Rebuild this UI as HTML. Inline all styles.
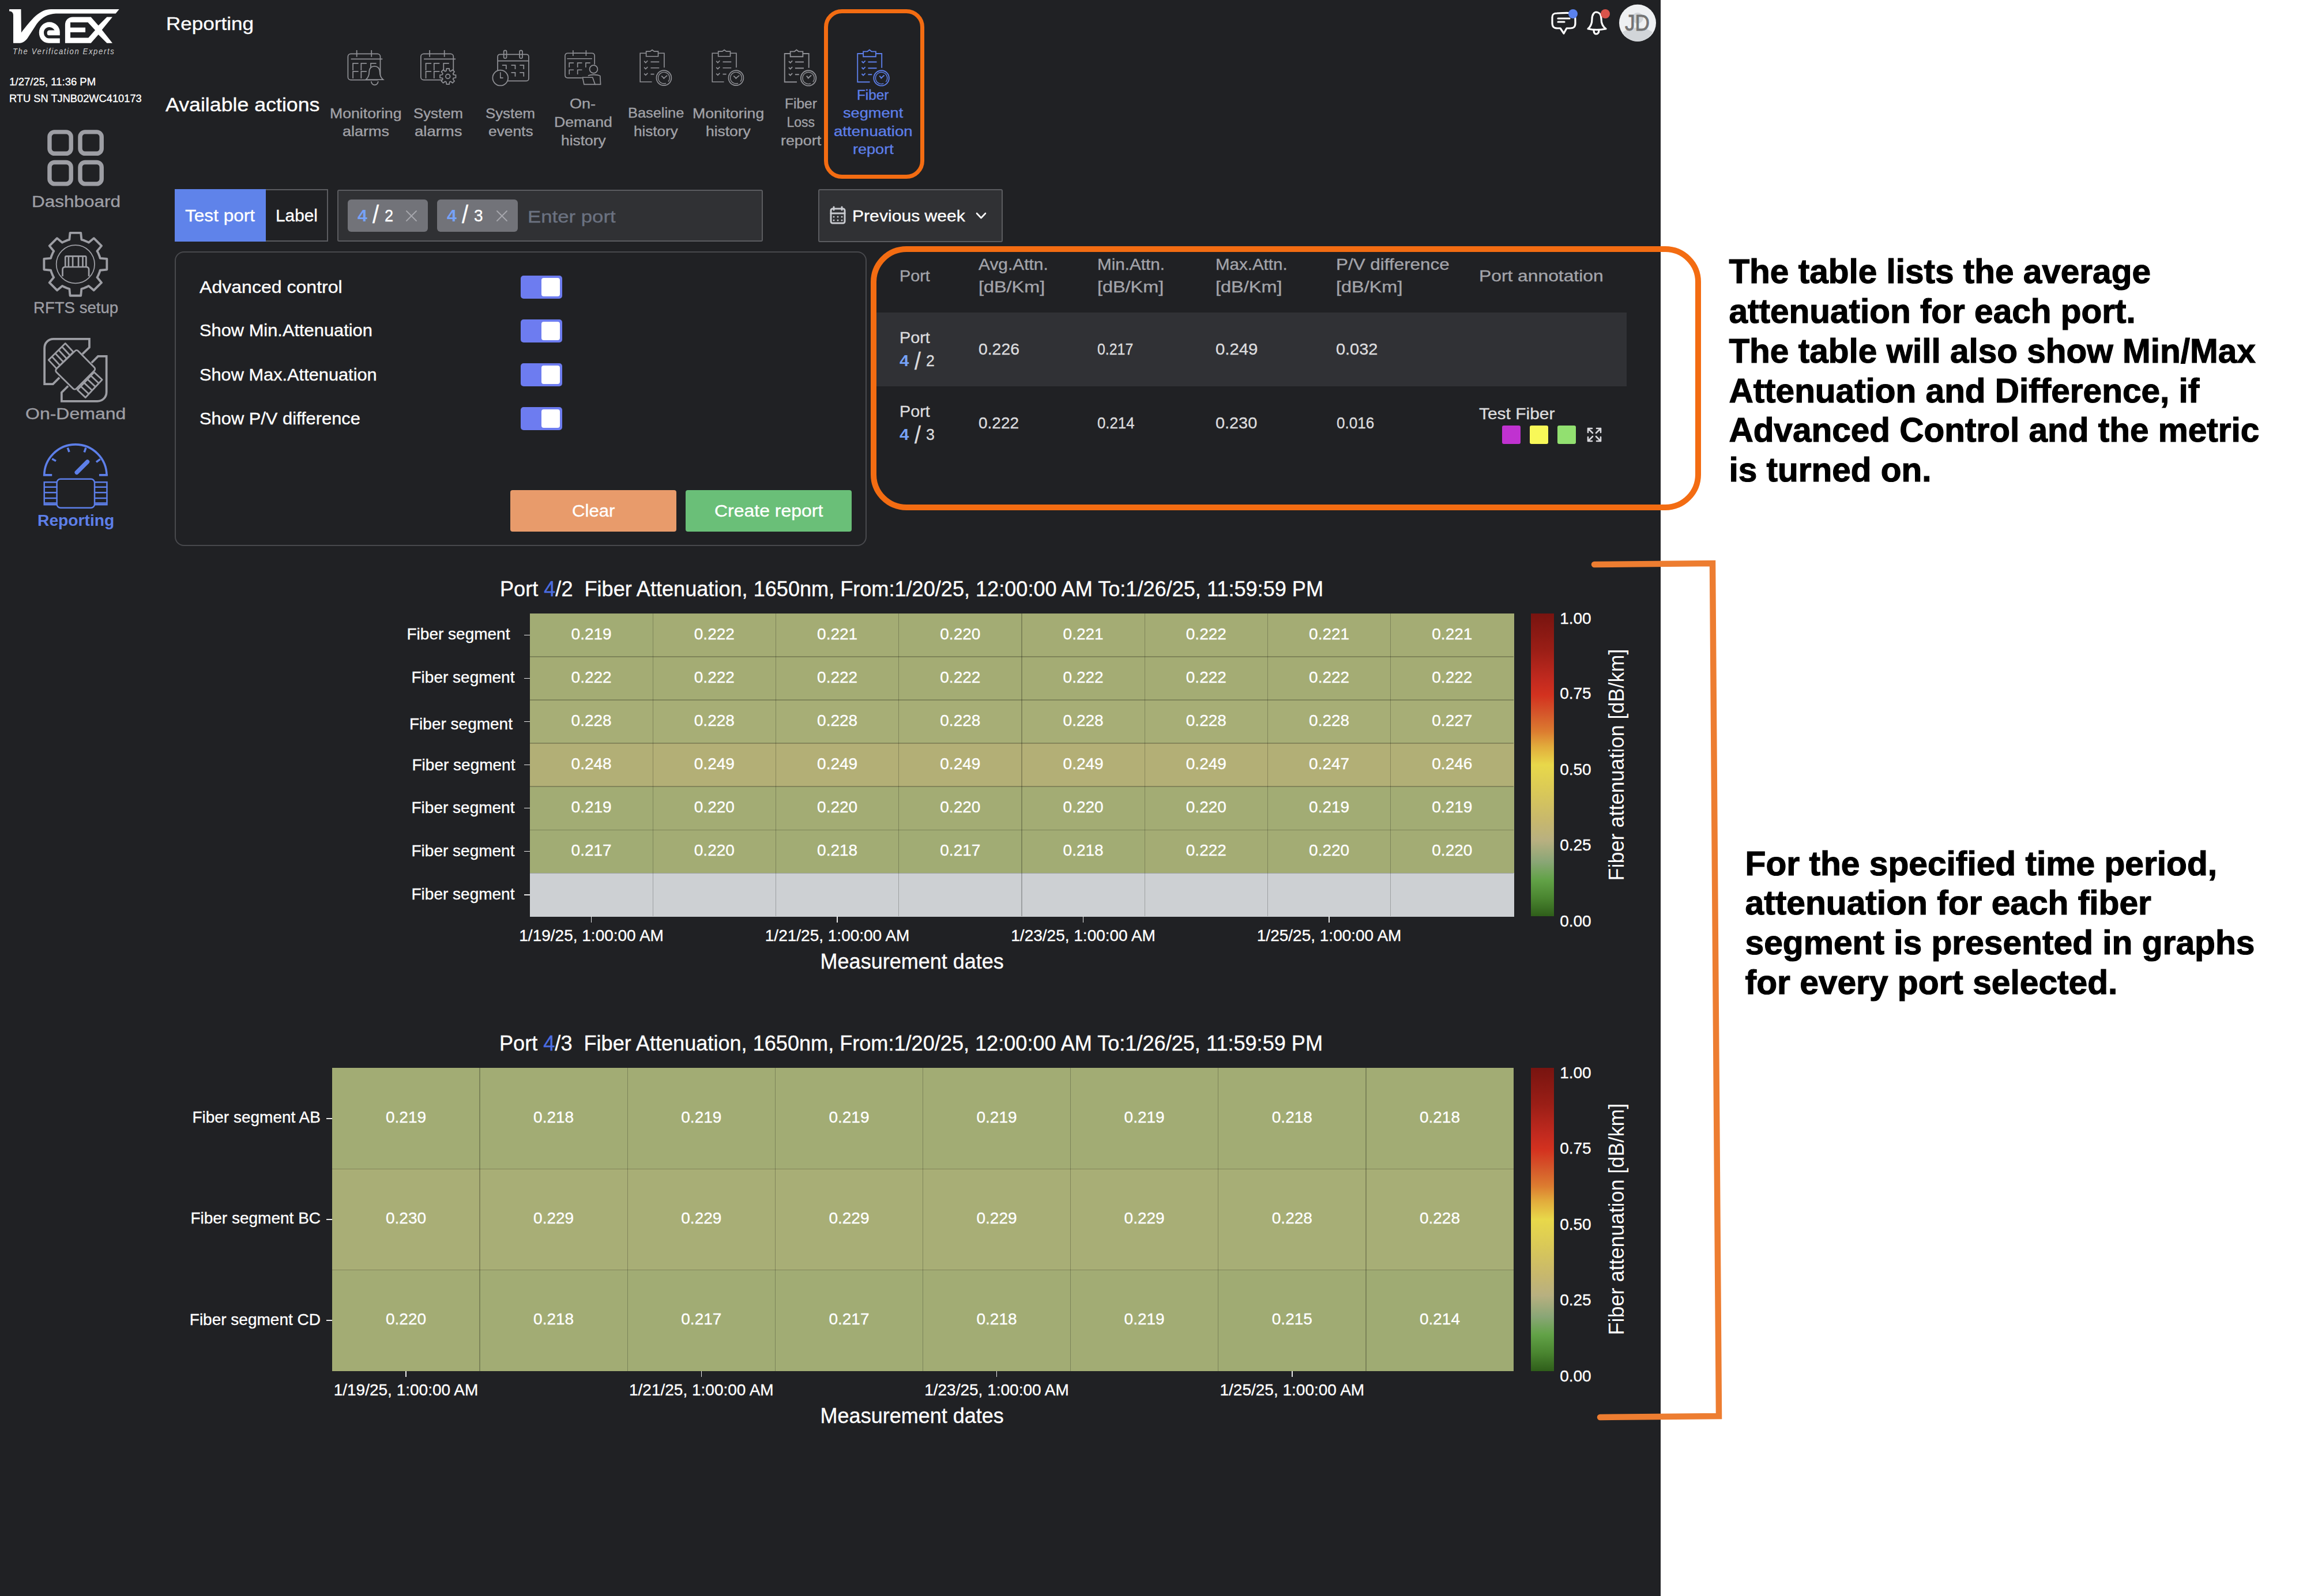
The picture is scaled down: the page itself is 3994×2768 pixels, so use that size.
<!DOCTYPE html>
<html><head><meta charset="utf-8"><style>
html,body{margin:0;padding:0;}
body{width:3994px;height:2768px;position:relative;background:#fff;font-family:'Liberation Sans', sans-serif;}
</style></head><body>
<div style="position:absolute;left:0.0px;top:0.0px;width:2880.0px;height:2768.0px;background:#202124;"></div>
<svg style="position:absolute;left:10px;top:10px;overflow:visible" width="200" height="90" viewBox="0 0 2303 1036" preserveAspectRatio="none">
<path fill="#fff" d="M70,68 L305,68 L310,535 C400,420 500,290 600,200 C700,110 800,68 900,68 L2265,68 L2195,155 L1000,155 C850,160 720,230 620,360 L440,640 C390,710 340,745 280,745 L150,745 L150,190 C150,130 110,110 70,110 Z"/>
<path fill="#fff" fill-rule="evenodd" d="M1080,745 L860,745 C740,745 665,650 665,535 C665,415 760,325 870,325 C990,325 1080,420 1080,520 L1080,590 L860,590 C835,590 825,570 825,540 C825,510 845,490 870,490 L975,490 C950,450 915,425 870,425 C805,425 760,475 760,535 C760,600 805,650 860,650 L1080,650 Z"/>
<path fill="#fff" fill-rule="evenodd" d="M1185,745 L1700,745 L1850,575 L2020,745 L2130,745 L1920,480 L2130,225 L2020,225 L1850,395 L1700,225 L1340,225 C1250,225 1185,290 1185,380 Z M1290,330 L1640,330 L1785,485 L1650,640 L1290,640 L1290,530 L1590,530 L1590,435 L1290,435 Z"/>
</svg>
<svg style="position:absolute;left:0px;top:200px;overflow:visible" width="280" height="360" viewBox="0 0 1241 1596" preserveAspectRatio="none">
<g fill="none" stroke="#9d9ea4" stroke-width="33">
<rect x="381" y="128" width="165" height="166" rx="38"/>
<rect x="616" y="128" width="165" height="166" rx="38"/>
<rect x="381" y="361" width="165" height="166" rx="38"/>
<rect x="616" y="361" width="165" height="166" rx="38"/>
</g>
<path d="M520.5,959.3 L533.6,955.6 L538.6,903.5 L621.4,903.5 L626.4,955.6 L639.5,959.3 L669.3,971.6 L681.2,978.3 L721.4,944.9 L780.1,1003.6 L746.7,1043.8 L753.4,1055.7 L765.7,1085.5 L769.4,1098.6 L821.5,1103.6 L821.5,1186.4 L769.4,1191.4 L765.7,1204.5 L753.4,1234.3 L746.7,1246.2 L780.1,1286.4 L721.4,1345.1 L681.2,1311.7 L669.3,1318.4 L639.5,1330.7 L626.4,1334.4 L621.4,1386.5 L538.6,1386.5 L533.6,1334.4 L520.5,1330.7 L490.7,1318.4 L478.8,1311.7 L438.6,1345.1 L379.9,1286.4 L413.3,1246.2 L406.6,1234.3 L394.3,1204.5 L390.6,1191.4 L338.5,1186.4 L338.5,1103.6 L390.6,1098.6 L394.3,1085.5 L406.6,1055.7 L413.3,1043.8 L379.9,1003.6 L438.6,944.9 L478.8,978.3 L490.7,971.6 Z" fill="none" stroke="#9d9ea4" stroke-width="17" stroke-linejoin="round"/>
<circle cx="580" cy="1145" r="147" fill="none" stroke="#9d9ea4" stroke-width="8"/>
<g fill="none" stroke="#9d9ea4" stroke-width="12" stroke-linejoin="round">
<path d="M502,1166 L502,1092 C502,1086 505,1083 511,1083 L653,1083 C659,1083 662,1086 662,1092 L662,1166"/>
<path d="M527,1083 L527,1166 M559,1083 L559,1166 M603,1083 L603,1166 M636,1083 L636,1166"/>
<path d="M481,1238 L481,1186 C481,1173 490,1166 503,1166 L661,1166 C674,1166 683,1173 683,1186 L683,1238"/>
</g>
</svg>
<svg style="position:absolute;left:70px;top:580px;overflow:visible" width="120" height="120" viewBox="0 0 1596 1596" preserveAspectRatio="none">
<g fill="none" stroke="#9d9ea4" stroke-width="50" stroke-linejoin="miter">
<path d="M970,455 L1130,300 L1130,105 L305,105 C185,105 95,195 95,315 L95,1145 L290,1145 L440,995"/>
<path d="M1180,655 L1330,505 L1525,505 L1525,1330 C1525,1450 1435,1540 1315,1540 L490,1540 L490,1340 L640,1190"/>
</g>
<g fill="none" stroke="#9d9ea4" stroke-width="38" stroke-linejoin="round">
<path d="M190,590 L575,205 L760,405 L375,790 Z M267,513 L452,713 M344,436 L529,636 M421,359 L606,559 M498,282 L683,482"/>
<path d="M855,1280 L1240,870 L1425,1045 L1040,1455 Z M932,1198 L1117,1373 M1009,1116 L1194,1291 M1086,1034 L1271,1209 M1163,952 L1348,1127"/>
<path d="M835,365 C850,365 862,372 875,385 L1245,760 C1265,780 1265,815 1245,835 L830,1250 C810,1270 775,1270 755,1250 L370,870 C350,850 350,815 370,795 L795,385 C808,372 820,365 835,365 Z" fill="#202124"/>
</g>
</svg>
<svg style="position:absolute;left:0px;top:560px;overflow:visible" width="280" height="360" viewBox="0 0 1241 1596" preserveAspectRatio="none">
<g fill="none" stroke="#5d7fe9" stroke-width="16">
<path d="M340,1175 A240,240 0 0 1 820,1175"/>
<path d="M332,1170 L400,1170 M762,1170 L828,1170"/>
<path d="M400,1045 L430,1062 M520,960 L532,992 M660,960 L648,995 M770,1048 L740,1070"/>
</g>
<path d="M590,1150 L672,1068" stroke="#5d7fe9" stroke-width="32" stroke-linecap="round"/>
<g fill="none" stroke="#5d7fe9" stroke-width="11">
<rect x="437" y="1200" width="290" height="222" rx="28"/>
<path d="M437,1225 L340,1225 L340,1398 L437,1398 M340,1262 L437,1262 M340,1305 L437,1305 M340,1348 L437,1348 M340,1385 L437,1385"/>
<path d="M727,1225 L822,1225 L822,1398 L727,1398 M727,1262 L822,1262 M727,1305 L822,1305 M727,1348 L822,1348 M727,1385 L822,1385"/>
</g>
</svg>
<svg style="position:absolute;left:560px;top:70px;overflow:visible" width="400" height="200" viewBox="0 0 2303 1152" preserveAspectRatio="none"><g fill="none" stroke="#8f9095" stroke-width="10"><rect x="250" y="135" width="323" height="260" rx="28"/><path d="M338,98 L338,165 M485,98 L485,165 M280,187 L595,187"/><path d="M300,300 L300,230 L355,230"/><path d="M382,300 L382,230 L437,230"/><path d="M478,300 L478,230 L533,230"/><path d="M300,380 L300,310 L355,310"/><path d="M382,380 L382,310 L437,310"/><path d="M428,393 C455,370 462,345 462,315 C462,280 485,258 515,258 C545,258 568,280 568,315 C568,345 575,370 602,393 Z" fill="#202124"/><path d="M482,410 C485,432 500,445 517,445 C534,445 549,432 552,410"/><rect x="978" y="135" width="325" height="260" rx="28"/><path d="M1066,98 L1066,165 M1213,98 L1213,165 M1008,187 L1325,187"/><path d="M1028,300 L1028,230 L1083,230"/><path d="M1110,300 L1110,230 L1165,230"/><path d="M1205,300 L1205,230 L1260,230"/><path d="M1028,380 L1028,310 L1083,310"/><path d="M1110,380 L1110,310 L1165,310"/><path fill="#202124" d="M1303,343 L1327,347 L1327,373 L1303,377 L1299,387 L1313,407 L1295,425 L1275,411 L1265,415 L1261,439 L1235,439 L1231,415 L1221,411 L1201,425 L1183,407 L1197,387 L1193,377 L1169,373 L1169,347 L1193,343 L1197,333 L1183,313 L1201,295 L1221,309 L1231,305 L1235,281 L1261,281 L1265,305 L1275,309 L1295,295 L1313,313 L1299,333 Z"/><circle cx="1248" cy="360" r="22"/><rect x="1745" y="140" width="310" height="265" rx="22"/><rect x="1806" y="100" width="28" height="80" rx="14"/><rect x="1964" y="100" width="28" height="80" rx="14"/><path d="M1745,205 L2055,205"/><path d="M1790,248 L1830,248 L1830,288"/><path d="M1880,248 L1920,248 L1920,288"/><path d="M1965,248 L2005,248 L2005,288"/><path d="M1880,322 L1920,322 L1920,362"/><path d="M1965,322 L2005,322 L2005,362"/><circle cx="1772" cy="375" r="77" fill="#202124"/><path d="M1772,318 L1772,375 L1800,375" stroke-width="9"/></g></svg>
<svg style="position:absolute;left:940px;top:70px;overflow:visible" width="400" height="200" viewBox="0 0 2303 1152" preserveAspectRatio="none"><g fill="none" stroke="#8f9095" stroke-width="9.5"><path d="M400,375 L258,375 C240,375 230,365 230,347 L230,156 C230,138 240,128 258,128 L497,128 C515,128 525,138 525,156 L525,240"/><path d="M310,100 L310,155 M440,100 L440,155 M320,128 L430,128 M250,183 L500,183"/><path d="M272,270 L272,225 L317,225"/><path d="M355,270 L355,225 L400,225"/><path d="M437,270 L437,225 L482,225"/><path d="M272,340 L272,295 L317,295"/><path d="M355,340 L355,295 L400,295"/><circle cx="515" cy="288" r="40"/><path d="M460,355 C480,340 550,340 580,355 L585,440 L530,440"/><path d="M405,370 L505,370 L530,440 L420,440 Z"/><path d="M1097,415 L980,415 L980,128 L1040,128 M1160,128 L1220,128 L1220,272"/><path d="M1040,160 L1040,110 L1080,110 L1100,95 L1120,110 L1160,110 L1160,160 Z"/><path d="M1020,207 L1035,223 L1055,203"/><path d="M1020,270 L1035,286 L1055,266"/><path d="M1020,332 L1035,348 L1055,328"/><path d="M1085,215 L1170,215 M1085,275 L1170,275 M1085,338 L1120,338"/><circle cx="1217" cy="375" r="75"/><path stroke-width="8" d="M1238.4,427.8 A57,57 0 1 1 1260.7,411.6"/><path d="M1193,355 L1217,378 L1250,350"/><circle cx="1217" cy="378" r="7" fill="#8f9095" stroke="none"/><path d="M1817,415 L1700,415 L1700,128 L1760,128 M1880,128 L1940,128 L1940,272"/><path d="M1760,160 L1760,110 L1800,110 L1820,95 L1840,110 L1880,110 L1880,160 Z"/><path d="M1740,207 L1755,223 L1775,203"/><path d="M1740,270 L1755,286 L1775,266"/><path d="M1740,332 L1755,348 L1775,328"/><path d="M1805,215 L1890,215 M1805,275 L1890,275 M1805,338 L1840,338"/><circle cx="1937" cy="375" r="75"/><path stroke-width="8" d="M1958.4,427.8 A57,57 0 1 1 1980.7,411.6"/><path d="M1913,355 L1937,378 L1970,350"/><circle cx="1937" cy="378" r="7" fill="#8f9095" stroke="none"/></g></svg>
<svg style="position:absolute;left:1320px;top:0px;overflow:visible" width="400" height="330" viewBox="0 0 1935 1596" preserveAspectRatio="none"><g fill="none" stroke="#8f9095" stroke-width="9"><path d="M300,688 L197,688 L197,450 L245,450 M350,450 L400,450 L400,570"/><path d="M245,475 L245,432 L280,432 L297,418 L314,432 L350,432 L350,475 Z"/><path d="M232,514 L245,527 L262,510"/><path d="M232,566 L245,579 L262,562"/><path d="M232,619 L245,632 L262,615"/><path d="M285,520 L358,520 M285,572 L358,572 M285,625 L318,625"/><circle cx="397" cy="655" r="64"/><path stroke-width="7" d="M415.4,700.4 A49,49 0 1 1 434.5,686.5"/><path d="M381,637 L396,654 L421,631"/><circle cx="396" cy="654" r="6" fill="#8f9095" stroke="none"/></g><g fill="none" stroke="#5d7fe9" stroke-width="9"><path d="M912,688 L809,688 L809,450 L857,450 M962,450 L1012,450 L1012,570"/><path d="M857,475 L857,432 L892,432 L909,418 L926,432 L962,432 L962,475 Z"/><path d="M844,514 L857,527 L874,510"/><path d="M844,566 L857,579 L874,562"/><path d="M844,619 L857,632 L874,615"/><path d="M897,520 L970,520 M897,572 L970,572 M897,625 L930,625"/><circle cx="1009" cy="655" r="64"/><path stroke-width="7" d="M1027.4,700.4 A49,49 0 1 1 1046.5,686.5"/><path d="M993,637 L1008,654 L1033,631"/><circle cx="1008" cy="654" r="6" fill="#5d7fe9" stroke="none"/></g></svg>
<svg style="position:absolute;left:0px;top:0px;overflow:visible" width="3994" height="2768" viewBox="0 0 3994 2768" preserveAspectRatio="none">
<g fill="none" stroke="#fff" stroke-width="3.2" stroke-linejoin="round" stroke-linecap="round">
<path d="M2700,23 C2718,22 2722,22 2726,23 C2732,24 2732,28 2732,40 C2732,47 2729,49 2722,49 L2717,49 L2712,58 L2706,49 L2701,49 C2694,49 2692,46 2692,40 L2692,30 C2692,25 2694,23 2700,23 Z"/>
<path d="M2702,32 L2722,32 M2702,38 L2713,38"/>
<path d="M2754,50 C2760,45 2761,38 2761,33 C2761,25 2765,21 2768,21 C2773,21 2777,25 2777,33 C2777,38 2778,45 2785,50 C2775,52 2763,52 2754,50 Z"/>
<path d="M2764,52 C2764,57 2766,59 2768,59 C2771,59 2773,57 2773,52"/>
</g>
<circle cx="2728" cy="24" r="8" fill="#5a82ee"/>
<circle cx="2784" cy="24" r="8" fill="#d9544b"/>
<circle cx="2840" cy="39.8" r="32" fill="#eef0f2"/>
<circle cx="2840.1" cy="31.3" r="9.6" fill="#d2d5d9"/>
<path d="M2814,56 C2821,50.5 2830,48 2840,48 C2850,48 2859,50.5 2866,56 C2860,66 2851,72 2840,72 C2829,72 2820,66 2814,56 Z" fill="#d2d5d9"/>
</svg>
<div style="position:absolute;left:303.0px;top:328.2px;width:265.8px;height:91.2px;background:#202124;box-sizing:border-box;border:2px solid #5b5c60;"></div>
<div style="position:absolute;left:303.0px;top:328.2px;width:157.9px;height:91.2px;background:#5f83ea;"></div>
<div style="position:absolute;left:585.2px;top:328.8px;width:737.6px;height:90.6px;background:#303134;border-radius:3px;box-sizing:border-box;border:2px solid #5b5c60;"></div>
<div style="position:absolute;left:603.2px;top:346.0px;width:138.8px;height:55.7px;background:#727379;border-radius:6px;"></div>
<div style="position:absolute;left:758.0px;top:346.0px;width:139.6px;height:55.7px;background:#727379;border-radius:6px;"></div>
<svg style="position:absolute;left:0px;top:0px;overflow:visible" width="3994" height="2768" viewBox="0 0 3994 2768" preserveAspectRatio="none"><g stroke="#a6a7ad" stroke-width="1.9" stroke-linecap="round"><path d="M705,366 L722,383 M722,366 L705,383"/><path d="M862,366 L879,383 M879,366 L862,383"/></g></svg>
<div style="position:absolute;left:1419.1px;top:328.3px;width:319.8px;height:91.4px;background:#303134;border-radius:3px;box-sizing:border-box;border:2px solid #5b5c60;"></div>
<svg style="position:absolute;left:0px;top:0px;overflow:visible" width="3994" height="2768" viewBox="0 0 3994 2768" preserveAspectRatio="none"><g fill="none" stroke="#c9cbd0" stroke-width="3" stroke-linecap="round">
<rect x="1441" y="362" width="24" height="25" rx="3"/>
<path d="M1441,370 L1465,370 M1446,359 L1446,364 M1460,359 L1460,364"/>
</g>
<g fill="#c9cbd0"><circle cx="1446" cy="376" r="1.5"/><circle cx="1453" cy="376" r="1.5"/><circle cx="1460" cy="376" r="1.5"/>
<circle cx="1446" cy="382" r="1.5"/><circle cx="1453" cy="382" r="1.5"/><circle cx="1460" cy="382" r="1.5"/></g>
<path d="M1694,370 L1701.5,378 L1709,370" fill="none" stroke="#fff" stroke-width="2.6" stroke-linecap="round" stroke-linejoin="round"/>
</svg>
<div style="position:absolute;left:303.4px;top:436.3px;width:1199.4px;height:510.7px;background:#202124;border-radius:16px;box-sizing:border-box;border:2px solid #48494d;"></div>
<div style="position:absolute;left:902.8px;top:478.2px;width:71.9px;height:39.7px;background:#6d7cf0;border-radius:5px;"></div>
<div style="position:absolute;left:938.7px;top:481.9px;width:32.2px;height:31.9px;background:#ffffff;border-radius:4px;"></div>
<div style="position:absolute;left:902.8px;top:554.3px;width:71.9px;height:39.7px;background:#6d7cf0;border-radius:5px;"></div>
<div style="position:absolute;left:938.7px;top:558.0px;width:32.2px;height:31.9px;background:#ffffff;border-radius:4px;"></div>
<div style="position:absolute;left:902.8px;top:630.3px;width:71.9px;height:39.7px;background:#6d7cf0;border-radius:5px;"></div>
<div style="position:absolute;left:938.7px;top:634.0px;width:32.2px;height:31.9px;background:#ffffff;border-radius:4px;"></div>
<div style="position:absolute;left:902.8px;top:706.4px;width:71.9px;height:39.7px;background:#6d7cf0;border-radius:5px;"></div>
<div style="position:absolute;left:938.7px;top:710.1px;width:32.2px;height:31.9px;background:#ffffff;border-radius:4px;"></div>
<div style="position:absolute;left:885.0px;top:850.0px;width:288.0px;height:71.7px;background:#e89b6b;border-radius:4px;"></div>
<div style="position:absolute;left:1189.1px;top:850.0px;width:288.2px;height:71.7px;background:#6abf78;border-radius:4px;"></div>
<div style="position:absolute;left:1520.0px;top:541.7px;width:1301.0px;height:127.9px;background:#303135;"></div>
<div style="position:absolute;left:2604.7px;top:737.9px;width:32.4px;height:31.9px;background:#c032d0;border-radius:3px;"></div>
<div style="position:absolute;left:2652.8px;top:737.9px;width:32.2px;height:31.9px;background:#f8f858;border-radius:3px;"></div>
<div style="position:absolute;left:2700.9px;top:737.9px;width:32.2px;height:31.9px;background:#92e070;border-radius:3px;"></div>
<svg style="position:absolute;left:0px;top:0px;overflow:visible" width="3994" height="2768" viewBox="0 0 3994 2768" preserveAspectRatio="none"><g fill="none" stroke="#d8d8dc" stroke-width="2.6" stroke-linecap="round" stroke-linejoin="round">
<path d="M2754,750 L2754,743 L2761,743 M2754,743 L2762,751"/>
<path d="M2776,750 L2776,743 L2769,743 M2776,743 L2768,751"/>
<path d="M2754,758 L2754,765 L2761,765 M2754,765 L2762,757"/>
<path d="M2776,758 L2776,765 L2769,765 M2776,765 L2768,757"/>
</g></svg>
<div style="position:absolute;left:919.0px;top:1063.8px;width:213.8px;height:75.6px;background:#a2ac74;"></div>
<div style="position:absolute;left:1132.2px;top:1063.8px;width:213.8px;height:75.6px;background:#a4ac74;"></div>
<div style="position:absolute;left:1345.5px;top:1063.8px;width:213.8px;height:75.6px;background:#a4ac74;"></div>
<div style="position:absolute;left:1558.8px;top:1063.8px;width:213.8px;height:75.6px;background:#a3ac74;"></div>
<div style="position:absolute;left:1772.0px;top:1063.8px;width:213.8px;height:75.6px;background:#a4ac74;"></div>
<div style="position:absolute;left:1985.2px;top:1063.8px;width:213.8px;height:75.6px;background:#a4ac74;"></div>
<div style="position:absolute;left:2198.5px;top:1063.8px;width:213.8px;height:75.6px;background:#a4ac74;"></div>
<div style="position:absolute;left:2411.8px;top:1063.8px;width:213.8px;height:75.6px;background:#a4ac74;"></div>
<div style="position:absolute;left:919.0px;top:1138.9px;width:213.8px;height:75.6px;background:#a4ac74;"></div>
<div style="position:absolute;left:1132.2px;top:1138.9px;width:213.8px;height:75.6px;background:#a4ac74;"></div>
<div style="position:absolute;left:1345.5px;top:1138.9px;width:213.8px;height:75.6px;background:#a4ac74;"></div>
<div style="position:absolute;left:1558.8px;top:1138.9px;width:213.8px;height:75.6px;background:#a4ac74;"></div>
<div style="position:absolute;left:1772.0px;top:1138.9px;width:213.8px;height:75.6px;background:#a4ac74;"></div>
<div style="position:absolute;left:1985.2px;top:1138.9px;width:213.8px;height:75.6px;background:#a4ac74;"></div>
<div style="position:absolute;left:2198.5px;top:1138.9px;width:213.8px;height:75.6px;background:#a4ac74;"></div>
<div style="position:absolute;left:2411.8px;top:1138.9px;width:213.8px;height:75.6px;background:#a4ac74;"></div>
<div style="position:absolute;left:919.0px;top:1213.9px;width:213.8px;height:75.6px;background:#a7ae76;"></div>
<div style="position:absolute;left:1132.2px;top:1213.9px;width:213.8px;height:75.6px;background:#a7ae76;"></div>
<div style="position:absolute;left:1345.5px;top:1213.9px;width:213.8px;height:75.6px;background:#a7ae76;"></div>
<div style="position:absolute;left:1558.8px;top:1213.9px;width:213.8px;height:75.6px;background:#a7ae76;"></div>
<div style="position:absolute;left:1772.0px;top:1213.9px;width:213.8px;height:75.6px;background:#a7ae76;"></div>
<div style="position:absolute;left:1985.2px;top:1213.9px;width:213.8px;height:75.6px;background:#a7ae76;"></div>
<div style="position:absolute;left:2198.5px;top:1213.9px;width:213.8px;height:75.6px;background:#a7ae76;"></div>
<div style="position:absolute;left:2411.8px;top:1213.9px;width:213.8px;height:75.6px;background:#a7ae76;"></div>
<div style="position:absolute;left:919.0px;top:1289.0px;width:213.8px;height:75.6px;background:#b2af76;"></div>
<div style="position:absolute;left:1132.2px;top:1289.0px;width:213.8px;height:75.6px;background:#b3af76;"></div>
<div style="position:absolute;left:1345.5px;top:1289.0px;width:213.8px;height:75.6px;background:#b3af76;"></div>
<div style="position:absolute;left:1558.8px;top:1289.0px;width:213.8px;height:75.6px;background:#b3af76;"></div>
<div style="position:absolute;left:1772.0px;top:1289.0px;width:213.8px;height:75.6px;background:#b3af76;"></div>
<div style="position:absolute;left:1985.2px;top:1289.0px;width:213.8px;height:75.6px;background:#b3af76;"></div>
<div style="position:absolute;left:2198.5px;top:1289.0px;width:213.8px;height:75.6px;background:#b2af76;"></div>
<div style="position:absolute;left:2411.8px;top:1289.0px;width:213.8px;height:75.6px;background:#b1af76;"></div>
<div style="position:absolute;left:919.0px;top:1364.1px;width:213.8px;height:75.6px;background:#a2ac74;"></div>
<div style="position:absolute;left:1132.2px;top:1364.1px;width:213.8px;height:75.6px;background:#a3ac74;"></div>
<div style="position:absolute;left:1345.5px;top:1364.1px;width:213.8px;height:75.6px;background:#a3ac74;"></div>
<div style="position:absolute;left:1558.8px;top:1364.1px;width:213.8px;height:75.6px;background:#a3ac74;"></div>
<div style="position:absolute;left:1772.0px;top:1364.1px;width:213.8px;height:75.6px;background:#a3ac74;"></div>
<div style="position:absolute;left:1985.2px;top:1364.1px;width:213.8px;height:75.6px;background:#a3ac74;"></div>
<div style="position:absolute;left:2198.5px;top:1364.1px;width:213.8px;height:75.6px;background:#a2ac74;"></div>
<div style="position:absolute;left:2411.8px;top:1364.1px;width:213.8px;height:75.6px;background:#a2ac74;"></div>
<div style="position:absolute;left:919.0px;top:1439.2px;width:213.8px;height:75.6px;background:#a1ac74;"></div>
<div style="position:absolute;left:1132.2px;top:1439.2px;width:213.8px;height:75.6px;background:#a3ac74;"></div>
<div style="position:absolute;left:1345.5px;top:1439.2px;width:213.8px;height:75.6px;background:#a2ac74;"></div>
<div style="position:absolute;left:1558.8px;top:1439.2px;width:213.8px;height:75.6px;background:#a1ac74;"></div>
<div style="position:absolute;left:1772.0px;top:1439.2px;width:213.8px;height:75.6px;background:#a2ac74;"></div>
<div style="position:absolute;left:1985.2px;top:1439.2px;width:213.8px;height:75.6px;background:#a4ac74;"></div>
<div style="position:absolute;left:2198.5px;top:1439.2px;width:213.8px;height:75.6px;background:#a3ac74;"></div>
<div style="position:absolute;left:2411.8px;top:1439.2px;width:213.8px;height:75.6px;background:#a3ac74;"></div>
<div style="position:absolute;left:919.0px;top:1514.2px;width:213.8px;height:75.6px;background:#cdd0d3;"></div>
<div style="position:absolute;left:1132.2px;top:1514.2px;width:213.8px;height:75.6px;background:#cdd0d3;"></div>
<div style="position:absolute;left:1345.5px;top:1514.2px;width:213.8px;height:75.6px;background:#cdd0d3;"></div>
<div style="position:absolute;left:1558.8px;top:1514.2px;width:213.8px;height:75.6px;background:#cdd0d3;"></div>
<div style="position:absolute;left:1772.0px;top:1514.2px;width:213.8px;height:75.6px;background:#cdd0d3;"></div>
<div style="position:absolute;left:1985.2px;top:1514.2px;width:213.8px;height:75.6px;background:#cdd0d3;"></div>
<div style="position:absolute;left:2198.5px;top:1514.2px;width:213.8px;height:75.6px;background:#cdd0d3;"></div>
<div style="position:absolute;left:2411.8px;top:1514.2px;width:213.8px;height:75.6px;background:#cdd0d3;"></div>
<div style="position:absolute;left:1131.5px;top:1063.8px;width:1.4px;height:525.5px;background:rgba(0,0,0,0.23);"></div>
<div style="position:absolute;left:1344.8px;top:1063.8px;width:1.4px;height:525.5px;background:rgba(0,0,0,0.23);"></div>
<div style="position:absolute;left:1558.0px;top:1063.8px;width:1.4px;height:525.5px;background:rgba(0,0,0,0.23);"></div>
<div style="position:absolute;left:1771.3px;top:1063.8px;width:1.4px;height:525.5px;background:rgba(0,0,0,0.23);"></div>
<div style="position:absolute;left:1984.5px;top:1063.8px;width:1.4px;height:525.5px;background:rgba(0,0,0,0.23);"></div>
<div style="position:absolute;left:2197.8px;top:1063.8px;width:1.4px;height:525.5px;background:rgba(0,0,0,0.23);"></div>
<div style="position:absolute;left:2411.1px;top:1063.8px;width:1.4px;height:525.5px;background:rgba(0,0,0,0.23);"></div>
<div style="position:absolute;left:919.0px;top:1138.2px;width:1706.0px;height:1.4px;background:rgba(0,0,0,0.23);"></div>
<div style="position:absolute;left:919.0px;top:1213.2px;width:1706.0px;height:1.4px;background:rgba(0,0,0,0.23);"></div>
<div style="position:absolute;left:919.0px;top:1288.3px;width:1706.0px;height:1.4px;background:rgba(0,0,0,0.23);"></div>
<div style="position:absolute;left:919.0px;top:1363.4px;width:1706.0px;height:1.4px;background:rgba(0,0,0,0.23);"></div>
<div style="position:absolute;left:919.0px;top:1438.5px;width:1706.0px;height:1.4px;background:rgba(0,0,0,0.23);"></div>
<div style="position:absolute;left:919.0px;top:1513.5px;width:1706.0px;height:1.4px;background:rgba(0,0,0,0.23);"></div>
<div style="position:absolute;left:909.0px;top:1100.6px;width:10.0px;height:1.5px;background:#e8e8e8;"></div>
<div style="position:absolute;left:909.0px;top:1175.7px;width:10.0px;height:1.5px;background:#e8e8e8;"></div>
<div style="position:absolute;left:909.0px;top:1250.7px;width:10.0px;height:1.5px;background:#e8e8e8;"></div>
<div style="position:absolute;left:909.0px;top:1325.8px;width:10.0px;height:1.5px;background:#e8e8e8;"></div>
<div style="position:absolute;left:909.0px;top:1400.9px;width:10.0px;height:1.5px;background:#e8e8e8;"></div>
<div style="position:absolute;left:909.0px;top:1475.9px;width:10.0px;height:1.5px;background:#e8e8e8;"></div>
<div style="position:absolute;left:909.0px;top:1551.0px;width:10.0px;height:1.5px;background:#e8e8e8;"></div>
<div style="position:absolute;left:1024.9px;top:1589.3px;width:1.5px;height:10.5px;background:#e8e8e8;"></div>
<div style="position:absolute;left:1451.4px;top:1589.3px;width:1.5px;height:10.5px;background:#e8e8e8;"></div>
<div style="position:absolute;left:1877.9px;top:1589.3px;width:1.5px;height:10.5px;background:#e8e8e8;"></div>
<div style="position:absolute;left:2304.4px;top:1589.3px;width:1.5px;height:10.5px;background:#e8e8e8;"></div>
<div style="position:absolute;left:2655.0px;top:1063.8px;width:40.2px;height:525.5px;background:linear-gradient(to bottom,#781410 0%,#9a1e16 12%,#c22a1f 22%,#d3321f 27%,#d5562a 33%,#dc7c30 39%,#e2ac3c 44%,#e8d84a 50%,#d9c858 59%,#c8b86c 68%,#b8b080 75%,#8aa676 82%,#62a247 88%,#4a8530 94%,#2f5e1a 100%);"></div>
<div style="position:absolute;left:576.0px;top:1852.2px;width:256.6px;height:175.6px;background:#a2ac74;"></div>
<div style="position:absolute;left:832.1px;top:1852.2px;width:256.6px;height:175.6px;background:#a2ac74;"></div>
<div style="position:absolute;left:1088.2px;top:1852.2px;width:256.6px;height:175.6px;background:#a2ac74;"></div>
<div style="position:absolute;left:1344.4px;top:1852.2px;width:256.6px;height:175.6px;background:#a2ac74;"></div>
<div style="position:absolute;left:1600.5px;top:1852.2px;width:256.6px;height:175.6px;background:#a2ac74;"></div>
<div style="position:absolute;left:1856.6px;top:1852.2px;width:256.6px;height:175.6px;background:#a2ac74;"></div>
<div style="position:absolute;left:2112.8px;top:1852.2px;width:256.6px;height:175.6px;background:#a2ac74;"></div>
<div style="position:absolute;left:2368.9px;top:1852.2px;width:256.6px;height:175.6px;background:#a2ac74;"></div>
<div style="position:absolute;left:576.0px;top:2027.3px;width:256.6px;height:175.6px;background:#a9ae76;"></div>
<div style="position:absolute;left:832.1px;top:2027.3px;width:256.6px;height:175.6px;background:#a8ae76;"></div>
<div style="position:absolute;left:1088.2px;top:2027.3px;width:256.6px;height:175.6px;background:#a8ae76;"></div>
<div style="position:absolute;left:1344.4px;top:2027.3px;width:256.6px;height:175.6px;background:#a8ae76;"></div>
<div style="position:absolute;left:1600.5px;top:2027.3px;width:256.6px;height:175.6px;background:#a8ae76;"></div>
<div style="position:absolute;left:1856.6px;top:2027.3px;width:256.6px;height:175.6px;background:#a8ae76;"></div>
<div style="position:absolute;left:2112.8px;top:2027.3px;width:256.6px;height:175.6px;background:#a7ae76;"></div>
<div style="position:absolute;left:2368.9px;top:2027.3px;width:256.6px;height:175.6px;background:#a7ae76;"></div>
<div style="position:absolute;left:576.0px;top:2202.5px;width:256.6px;height:175.6px;background:#a3ac74;"></div>
<div style="position:absolute;left:832.1px;top:2202.5px;width:256.6px;height:175.6px;background:#a2ac74;"></div>
<div style="position:absolute;left:1088.2px;top:2202.5px;width:256.6px;height:175.6px;background:#a1ac74;"></div>
<div style="position:absolute;left:1344.4px;top:2202.5px;width:256.6px;height:175.6px;background:#a1ac74;"></div>
<div style="position:absolute;left:1600.5px;top:2202.5px;width:256.6px;height:175.6px;background:#a2ac74;"></div>
<div style="position:absolute;left:1856.6px;top:2202.5px;width:256.6px;height:175.6px;background:#a2ac74;"></div>
<div style="position:absolute;left:2112.8px;top:2202.5px;width:256.6px;height:175.6px;background:#a0ab73;"></div>
<div style="position:absolute;left:2368.9px;top:2202.5px;width:256.6px;height:175.6px;background:#9fab73;"></div>
<div style="position:absolute;left:831.4px;top:1852.2px;width:1.4px;height:525.4px;background:rgba(0,0,0,0.23);"></div>
<div style="position:absolute;left:1087.5px;top:1852.2px;width:1.4px;height:525.4px;background:rgba(0,0,0,0.23);"></div>
<div style="position:absolute;left:1343.7px;top:1852.2px;width:1.4px;height:525.4px;background:rgba(0,0,0,0.23);"></div>
<div style="position:absolute;left:1599.8px;top:1852.2px;width:1.4px;height:525.4px;background:rgba(0,0,0,0.23);"></div>
<div style="position:absolute;left:1855.9px;top:1852.2px;width:1.4px;height:525.4px;background:rgba(0,0,0,0.23);"></div>
<div style="position:absolute;left:2112.1px;top:1852.2px;width:1.4px;height:525.4px;background:rgba(0,0,0,0.23);"></div>
<div style="position:absolute;left:2368.2px;top:1852.2px;width:1.4px;height:525.4px;background:rgba(0,0,0,0.23);"></div>
<div style="position:absolute;left:576.0px;top:2026.6px;width:2049.0px;height:1.4px;background:rgba(0,0,0,0.23);"></div>
<div style="position:absolute;left:576.0px;top:2201.8px;width:2049.0px;height:1.4px;background:rgba(0,0,0,0.23);"></div>
<div style="position:absolute;left:566.0px;top:1939.0px;width:10.0px;height:1.5px;background:#e8e8e8;"></div>
<div style="position:absolute;left:566.0px;top:2114.2px;width:10.0px;height:1.5px;background:#e8e8e8;"></div>
<div style="position:absolute;left:566.0px;top:2289.3px;width:10.0px;height:1.5px;background:#e8e8e8;"></div>
<div style="position:absolute;left:703.3px;top:2377.6px;width:1.5px;height:10.5px;background:#e8e8e8;"></div>
<div style="position:absolute;left:1215.6px;top:2377.6px;width:1.5px;height:10.5px;background:#e8e8e8;"></div>
<div style="position:absolute;left:1727.8px;top:2377.6px;width:1.5px;height:10.5px;background:#e8e8e8;"></div>
<div style="position:absolute;left:2240.1px;top:2377.6px;width:1.5px;height:10.5px;background:#e8e8e8;"></div>
<div style="position:absolute;left:2655.0px;top:1852.2px;width:40.2px;height:525.4px;background:linear-gradient(to bottom,#781410 0%,#9a1e16 12%,#c22a1f 22%,#d3321f 27%,#d5562a 33%,#dc7c30 39%,#e2ac3c 44%,#e8d84a 50%,#d9c858 59%,#c8b86c 68%,#b8b080 75%,#8aa676 82%,#62a247 88%,#4a8530 94%,#2f5e1a 100%);"></div>
<div id="t0" style="position:absolute;left:22.2px;top:81.1px;font-size:15.2px;line-height:1;white-space:pre;color:#cfcfcf;font-weight:400;font-family:'Liberation Sans', sans-serif;transform:scaleX(0.8596);transform-origin:0 0;font-style:italic;letter-spacing:1.9px;">The Verification Experts</div>
<div id="t1" style="position:absolute;left:16.3px;top:132.8px;font-size:18.5px;-webkit-text-stroke-width:0.35px;line-height:1;white-space:pre;color:#ffffff;font-weight:400;font-family:'Liberation Sans', sans-serif;">1/27/25, 11:36 PM</div>
<div id="t2" style="position:absolute;left:16.3px;top:162.2px;font-size:18.5px;-webkit-text-stroke-width:0.35px;line-height:1;white-space:pre;color:#ffffff;font-weight:400;font-family:'Liberation Sans', sans-serif;transform:scaleX(0.9870);transform-origin:0 0;">RTU SN TJNB02WC410173</div>
<div id="t3" style="position:absolute;left:54.6px;top:336.9px;font-size:27px;-webkit-text-stroke-width:0.35px;line-height:1;white-space:pre;color:#9d9ea4;font-weight:400;font-family:'Liberation Sans', sans-serif;transform:scaleX(1.1666);transform-origin:0 0;">Dashboard</div>
<div id="t4" style="position:absolute;left:58.2px;top:520.8px;font-size:27px;-webkit-text-stroke-width:0.35px;line-height:1;white-space:pre;color:#9d9ea4;font-weight:400;font-family:'Liberation Sans', sans-serif;transform:scaleX(1.0212);transform-origin:0 0;">RFTS setup</div>
<div id="t5" style="position:absolute;left:44.0px;top:704.8px;font-size:27px;-webkit-text-stroke-width:0.35px;line-height:1;white-space:pre;color:#9d9ea4;font-weight:400;font-family:'Liberation Sans', sans-serif;transform:scaleX(1.1858);transform-origin:0 0;">On-Demand</div>
<div id="t6" style="position:absolute;left:64.8px;top:889.8px;font-size:27px;line-height:1;white-space:pre;color:#5d7fe9;font-weight:700;font-family:'Liberation Sans', sans-serif;transform:scaleX(1.0455);transform-origin:0 0;">Reporting</div>
<div id="t7" style="position:absolute;left:288.3px;top:24.8px;font-size:32px;-webkit-text-stroke-width:0.35px;line-height:1;white-space:pre;color:#ffffff;font-weight:400;font-family:'Liberation Sans', sans-serif;transform:scaleX(1.0955);transform-origin:0 0;">Reporting</div>
<div id="t8" style="position:absolute;left:287.2px;top:164.5px;font-size:33px;-webkit-text-stroke-width:0.35px;line-height:1;white-space:pre;color:#ffffff;font-weight:400;font-family:'Liberation Sans', sans-serif;transform:scaleX(1.0827);transform-origin:0 0;">Available actions</div>
<div id="t9" style="position:absolute;left:571.8px;top:185.7px;font-size:23px;-webkit-text-stroke-width:0.35px;line-height:1;white-space:pre;color:#a0a1a7;font-weight:400;font-family:'Liberation Sans', sans-serif;transform:scaleX(1.1593);transform-origin:0 0;">Monitoring</div>
<div id="t10" style="position:absolute;left:593.9px;top:217.0px;font-size:23px;-webkit-text-stroke-width:0.35px;line-height:1;white-space:pre;color:#a0a1a7;font-weight:400;font-family:'Liberation Sans', sans-serif;transform:scaleX(1.1751);transform-origin:0 0;">alarms</div>
<div id="t11" style="position:absolute;left:717.2px;top:185.7px;font-size:23px;-webkit-text-stroke-width:0.35px;line-height:1;white-space:pre;color:#a0a1a7;font-weight:400;font-family:'Liberation Sans', sans-serif;transform:scaleX(1.1214);transform-origin:0 0;">System</div>
<div id="t12" style="position:absolute;left:718.9px;top:217.0px;font-size:23px;-webkit-text-stroke-width:0.35px;line-height:1;white-space:pre;color:#a0a1a7;font-weight:400;font-family:'Liberation Sans', sans-serif;transform:scaleX(1.1954);transform-origin:0 0;">alarms</div>
<div id="t13" style="position:absolute;left:842.2px;top:185.7px;font-size:23px;-webkit-text-stroke-width:0.35px;line-height:1;white-space:pre;color:#a0a1a7;font-weight:400;font-family:'Liberation Sans', sans-serif;transform:scaleX(1.1214);transform-origin:0 0;">System</div>
<div id="t14" style="position:absolute;left:846.6px;top:217.0px;font-size:23px;-webkit-text-stroke-width:0.35px;line-height:1;white-space:pre;color:#a0a1a7;font-weight:400;font-family:'Liberation Sans', sans-serif;transform:scaleX(1.1451);transform-origin:0 0;">events</div>
<div id="t15" style="position:absolute;left:988.3px;top:169.2px;font-size:23px;-webkit-text-stroke-width:0.35px;line-height:1;white-space:pre;color:#a0a1a7;font-weight:400;font-family:'Liberation Sans', sans-serif;transform:scaleX(1.1762);transform-origin:0 0;">On-</div>
<div id="t16" style="position:absolute;left:960.8px;top:200.8px;font-size:23px;-webkit-text-stroke-width:0.35px;line-height:1;white-space:pre;color:#a0a1a7;font-weight:400;font-family:'Liberation Sans', sans-serif;transform:scaleX(1.1595);transform-origin:0 0;">Demand</div>
<div id="t17" style="position:absolute;left:973.0px;top:232.6px;font-size:23px;-webkit-text-stroke-width:0.35px;line-height:1;white-space:pre;color:#a0a1a7;font-weight:400;font-family:'Liberation Sans', sans-serif;transform:scaleX(1.1454);transform-origin:0 0;">history</div>
<div id="t18" style="position:absolute;left:1088.5px;top:184.8px;font-size:23px;-webkit-text-stroke-width:0.35px;line-height:1;white-space:pre;color:#a0a1a7;font-weight:400;font-family:'Liberation Sans', sans-serif;transform:scaleX(1.1027);transform-origin:0 0;">Baseline</div>
<div id="t19" style="position:absolute;left:1099.0px;top:217.0px;font-size:23px;-webkit-text-stroke-width:0.35px;line-height:1;white-space:pre;color:#a0a1a7;font-weight:400;font-family:'Liberation Sans', sans-serif;transform:scaleX(1.1321);transform-origin:0 0;">history</div>
<div id="t20" style="position:absolute;left:1200.5px;top:185.7px;font-size:23px;-webkit-text-stroke-width:0.35px;line-height:1;white-space:pre;color:#a0a1a7;font-weight:400;font-family:'Liberation Sans', sans-serif;transform:scaleX(1.1565);transform-origin:0 0;">Monitoring</div>
<div id="t21" style="position:absolute;left:1224.0px;top:217.0px;font-size:23px;-webkit-text-stroke-width:0.35px;line-height:1;white-space:pre;color:#a0a1a7;font-weight:400;font-family:'Liberation Sans', sans-serif;transform:scaleX(1.1483);transform-origin:0 0;">history</div>
<div id="t22" style="position:absolute;left:1360.7px;top:169.2px;font-size:23px;-webkit-text-stroke-width:0.35px;line-height:1;white-space:pre;color:#a0a1a7;font-weight:400;font-family:'Liberation Sans', sans-serif;transform:scaleX(1.0648);transform-origin:0 0;">Fiber</div>
<div id="t23" style="position:absolute;left:1364.4px;top:200.6px;font-size:23px;-webkit-text-stroke-width:0.35px;line-height:1;white-space:pre;color:#a0a1a7;font-weight:400;font-family:'Liberation Sans', sans-serif;">Loss</div>
<div id="t24" style="position:absolute;left:1353.7px;top:232.7px;font-size:23px;-webkit-text-stroke-width:0.35px;line-height:1;white-space:pre;color:#a0a1a7;font-weight:400;font-family:'Liberation Sans', sans-serif;transform:scaleX(1.1665);transform-origin:0 0;">report</div>
<div id="t25" style="position:absolute;left:1486.4px;top:154.3px;font-size:23px;-webkit-text-stroke-width:0.35px;line-height:1;white-space:pre;color:#5d7fe9;font-weight:400;font-family:'Liberation Sans', sans-serif;transform:scaleX(1.0571);transform-origin:0 0;">Fiber</div>
<div id="t26" style="position:absolute;left:1462.2px;top:184.7px;font-size:23px;-webkit-text-stroke-width:0.35px;line-height:1;white-space:pre;color:#5d7fe9;font-weight:400;font-family:'Liberation Sans', sans-serif;transform:scaleX(1.1812);transform-origin:0 0;">segment</div>
<div id="t27" style="position:absolute;left:1445.5px;top:216.8px;font-size:23px;-webkit-text-stroke-width:0.35px;line-height:1;white-space:pre;color:#5d7fe9;font-weight:400;font-family:'Liberation Sans', sans-serif;transform:scaleX(1.2001);transform-origin:0 0;">attenuation</div>
<div id="t28" style="position:absolute;left:1478.8px;top:247.8px;font-size:23px;-webkit-text-stroke-width:0.35px;line-height:1;white-space:pre;color:#5d7fe9;font-weight:400;font-family:'Liberation Sans', sans-serif;transform:scaleX(1.1765);transform-origin:0 0;">report</div>
<div id="t29" style="position:absolute;left:2818.3px;top:20.6px;font-size:38.5px;line-height:1;white-space:pre;color:#747474;font-weight:400;font-family:'Liberation Sans', sans-serif;transform:scaleX(0.9116);transform-origin:0 0;-webkit-text-stroke:0.9px #747474;">JD</div>
<div id="t30" style="position:absolute;left:321.3px;top:358.9px;font-size:30px;-webkit-text-stroke-width:0.35px;line-height:1;white-space:pre;color:#ffffff;font-weight:400;font-family:'Liberation Sans', sans-serif;transform:scaleX(1.0525);transform-origin:0 0;">Test port</div>
<div id="t31" style="position:absolute;left:477.6px;top:358.9px;font-size:30px;-webkit-text-stroke-width:0.35px;line-height:1;white-space:pre;color:#ffffff;font-weight:400;font-family:'Liberation Sans', sans-serif;transform:scaleX(0.9931);transform-origin:0 0;">Label</div>
<div id="t32" style="position:absolute;left:619.6px;top:358.9px;font-size:30px;line-height:1;white-space:pre;color:#76a2f7;font-weight:700;font-family:'Liberation Sans', sans-serif;transform:scaleX(1.0127);transform-origin:0 0;">4</div>
<div id="t33" style="position:absolute;left:645.9px;top:351.4px;font-size:43.6px;-webkit-text-stroke-width:0.35px;line-height:1;white-space:pre;color:#ffffff;font-weight:400;font-family:'Liberation Sans', sans-serif;transform:scaleX(0.9155);transform-origin:0 0;">/</div>
<div id="t34" style="position:absolute;left:666.5px;top:358.9px;font-size:30px;-webkit-text-stroke-width:0.35px;line-height:1;white-space:pre;color:#ffffff;font-weight:400;font-family:'Liberation Sans', sans-serif;transform:scaleX(0.9049);transform-origin:0 0;">2</div>
<div id="t35" style="position:absolute;left:774.7px;top:358.9px;font-size:30px;line-height:1;white-space:pre;color:#76a2f7;font-weight:700;font-family:'Liberation Sans', sans-serif;transform:scaleX(1.0127);transform-origin:0 0;">4</div>
<div id="t36" style="position:absolute;left:800.7px;top:351.4px;font-size:43.6px;-webkit-text-stroke-width:0.35px;line-height:1;white-space:pre;color:#ffffff;font-weight:400;font-family:'Liberation Sans', sans-serif;transform:scaleX(0.9155);transform-origin:0 0;">/</div>
<div id="t37" style="position:absolute;left:821.6px;top:358.9px;font-size:30px;-webkit-text-stroke-width:0.35px;line-height:1;white-space:pre;color:#ffffff;font-weight:400;font-family:'Liberation Sans', sans-serif;transform:scaleX(0.9348);transform-origin:0 0;">3</div>
<div id="t38" style="position:absolute;left:915.1px;top:360.8px;font-size:30px;-webkit-text-stroke-width:0.35px;line-height:1;white-space:pre;color:#6b7281;font-weight:400;font-family:'Liberation Sans', sans-serif;transform:scaleX(1.1592);transform-origin:0 0;">Enter port</div>
<div id="t39" style="position:absolute;left:1477.7px;top:359.5px;font-size:28.5px;-webkit-text-stroke-width:0.35px;line-height:1;white-space:pre;color:#ffffff;font-weight:400;font-family:'Liberation Sans', sans-serif;transform:scaleX(1.0570);transform-origin:0 0;">Previous week</div>
<div id="t40" style="position:absolute;left:345.6px;top:483.6px;font-size:29px;-webkit-text-stroke-width:0.35px;line-height:1;white-space:pre;color:#ffffff;font-weight:400;font-family:'Liberation Sans', sans-serif;transform:scaleX(1.1053);transform-origin:0 0;">Advanced control</div>
<div id="t41" style="position:absolute;left:345.6px;top:559.3px;font-size:29px;-webkit-text-stroke-width:0.35px;line-height:1;white-space:pre;color:#ffffff;font-weight:400;font-family:'Liberation Sans', sans-serif;transform:scaleX(1.0630);transform-origin:0 0;">Show Min.Attenuation</div>
<div id="t42" style="position:absolute;left:345.6px;top:635.9px;font-size:29px;-webkit-text-stroke-width:0.35px;line-height:1;white-space:pre;color:#ffffff;font-weight:400;font-family:'Liberation Sans', sans-serif;transform:scaleX(1.0604);transform-origin:0 0;">Show Max.Attenuation</div>
<div id="t43" style="position:absolute;left:345.6px;top:711.9px;font-size:29px;-webkit-text-stroke-width:0.35px;line-height:1;white-space:pre;color:#ffffff;font-weight:400;font-family:'Liberation Sans', sans-serif;transform:scaleX(1.0636);transform-origin:0 0;">Show P/V difference</div>
<div id="t44" style="position:absolute;left:991.5px;top:872.0px;font-size:29px;-webkit-text-stroke-width:0.35px;line-height:1;white-space:pre;color:#ffffff;font-weight:400;font-family:'Liberation Sans', sans-serif;transform:scaleX(1.0748);transform-origin:0 0;">Clear</div>
<div id="t45" style="position:absolute;left:1238.8px;top:872.0px;font-size:29px;-webkit-text-stroke-width:0.35px;line-height:1;white-space:pre;color:#ffffff;font-weight:400;font-family:'Liberation Sans', sans-serif;transform:scaleX(1.1027);transform-origin:0 0;">Create report</div>
<div id="t46" style="position:absolute;left:1559.9px;top:464.5px;font-size:27.5px;-webkit-text-stroke-width:0.35px;line-height:1;white-space:pre;color:#a3a4aa;font-weight:400;font-family:'Liberation Sans', sans-serif;transform:scaleX(1.0449);transform-origin:0 0;">Port</div>
<div id="t47" style="position:absolute;left:1696.7px;top:444.7px;font-size:27.5px;-webkit-text-stroke-width:0.35px;line-height:1;white-space:pre;color:#a3a4aa;font-weight:400;font-family:'Liberation Sans', sans-serif;transform:scaleX(1.0865);transform-origin:0 0;">Avg.Attn.</div>
<div id="t48" style="position:absolute;left:1696.7px;top:484.1px;font-size:27.5px;-webkit-text-stroke-width:0.35px;line-height:1;white-space:pre;color:#a3a4aa;font-weight:400;font-family:'Liberation Sans', sans-serif;transform:scaleX(1.1778);transform-origin:0 0;">[dB/Km]</div>
<div id="t49" style="position:absolute;left:1903.3px;top:444.7px;font-size:27.5px;-webkit-text-stroke-width:0.35px;line-height:1;white-space:pre;color:#a3a4aa;font-weight:400;font-family:'Liberation Sans', sans-serif;transform:scaleX(1.0782);transform-origin:0 0;">Min.Attn.</div>
<div id="t50" style="position:absolute;left:1903.3px;top:484.1px;font-size:27.5px;-webkit-text-stroke-width:0.35px;line-height:1;white-space:pre;color:#a3a4aa;font-weight:400;font-family:'Liberation Sans', sans-serif;transform:scaleX(1.1778);transform-origin:0 0;">[dB/Km]</div>
<div id="t51" style="position:absolute;left:2107.8px;top:444.7px;font-size:27.5px;-webkit-text-stroke-width:0.35px;line-height:1;white-space:pre;color:#a3a4aa;font-weight:400;font-family:'Liberation Sans', sans-serif;transform:scaleX(1.0727);transform-origin:0 0;">Max.Attn.</div>
<div id="t52" style="position:absolute;left:2107.8px;top:484.1px;font-size:27.5px;-webkit-text-stroke-width:0.35px;line-height:1;white-space:pre;color:#a3a4aa;font-weight:400;font-family:'Liberation Sans', sans-serif;transform:scaleX(1.1808);transform-origin:0 0;">[dB/Km]</div>
<div id="t53" style="position:absolute;left:2317.1px;top:444.7px;font-size:27.5px;-webkit-text-stroke-width:0.35px;line-height:1;white-space:pre;color:#a3a4aa;font-weight:400;font-family:'Liberation Sans', sans-serif;transform:scaleX(1.1419);transform-origin:0 0;">P/V difference</div>
<div id="t54" style="position:absolute;left:2317.1px;top:484.1px;font-size:27.5px;-webkit-text-stroke-width:0.35px;line-height:1;white-space:pre;color:#a3a4aa;font-weight:400;font-family:'Liberation Sans', sans-serif;transform:scaleX(1.1798);transform-origin:0 0;">[dB/Km]</div>
<div id="t55" style="position:absolute;left:2564.7px;top:465.0px;font-size:27.5px;-webkit-text-stroke-width:0.35px;line-height:1;white-space:pre;color:#a3a4aa;font-weight:400;font-family:'Liberation Sans', sans-serif;transform:scaleX(1.1558);transform-origin:0 0;">Port annotation</div>
<div id="t56" style="position:absolute;left:1559.9px;top:572.4px;font-size:27.5px;-webkit-text-stroke-width:0.35px;line-height:1;white-space:pre;color:#dcdcde;font-weight:400;font-family:'Liberation Sans', sans-serif;transform:scaleX(1.0449);transform-origin:0 0;">Port</div>
<div id="t57" style="position:absolute;left:1559.9px;top:612.3px;font-size:27.5px;line-height:1;white-space:pre;color:#76a2f7;font-weight:700;font-family:'Liberation Sans', sans-serif;transform:scaleX(1.0721);transform-origin:0 0;">4</div>
<div id="t58" style="position:absolute;left:1586.0px;top:605.1px;font-size:42.6px;-webkit-text-stroke-width:0.35px;line-height:1;white-space:pre;color:#dcdcde;font-weight:400;font-family:'Liberation Sans', sans-serif;transform:scaleX(0.9203);transform-origin:0 0;">/</div>
<div id="t59" style="position:absolute;left:1606.3px;top:612.3px;font-size:27.5px;-webkit-text-stroke-width:0.35px;line-height:1;white-space:pre;color:#dcdcde;font-weight:400;font-family:'Liberation Sans', sans-serif;transform:scaleX(0.9741);transform-origin:0 0;">2</div>
<div id="t60" style="position:absolute;left:1696.7px;top:592.2px;font-size:27.5px;-webkit-text-stroke-width:0.35px;line-height:1;white-space:pre;color:#dcdcde;font-weight:400;font-family:'Liberation Sans', sans-serif;transform:scaleX(1.0301);transform-origin:0 0;">0.226</div>
<div id="t61" style="position:absolute;left:1903.3px;top:592.2px;font-size:27.5px;-webkit-text-stroke-width:0.35px;line-height:1;white-space:pre;color:#dcdcde;font-weight:400;font-family:'Liberation Sans', sans-serif;transform:scaleX(0.9052);transform-origin:0 0;">0.217</div>
<div id="t62" style="position:absolute;left:2107.8px;top:592.2px;font-size:27.5px;-webkit-text-stroke-width:0.35px;line-height:1;white-space:pre;color:#dcdcde;font-weight:400;font-family:'Liberation Sans', sans-serif;transform:scaleX(1.0650);transform-origin:0 0;">0.249</div>
<div id="t63" style="position:absolute;left:2317.1px;top:592.2px;font-size:27.5px;-webkit-text-stroke-width:0.35px;line-height:1;white-space:pre;color:#dcdcde;font-weight:400;font-family:'Liberation Sans', sans-serif;transform:scaleX(1.0519);transform-origin:0 0;">0.032</div>
<div id="t64" style="position:absolute;left:1559.9px;top:700.3px;font-size:27.5px;-webkit-text-stroke-width:0.35px;line-height:1;white-space:pre;color:#dcdcde;font-weight:400;font-family:'Liberation Sans', sans-serif;transform:scaleX(1.0449);transform-origin:0 0;">Port</div>
<div id="t65" style="position:absolute;left:1559.9px;top:740.2px;font-size:27.5px;line-height:1;white-space:pre;color:#76a2f7;font-weight:700;font-family:'Liberation Sans', sans-serif;transform:scaleX(1.0721);transform-origin:0 0;">4</div>
<div id="t66" style="position:absolute;left:1586.0px;top:733.0px;font-size:42.6px;-webkit-text-stroke-width:0.35px;line-height:1;white-space:pre;color:#dcdcde;font-weight:400;font-family:'Liberation Sans', sans-serif;transform:scaleX(0.9203);transform-origin:0 0;">/</div>
<div id="t67" style="position:absolute;left:1606.3px;top:740.2px;font-size:27.5px;-webkit-text-stroke-width:0.35px;line-height:1;white-space:pre;color:#dcdcde;font-weight:400;font-family:'Liberation Sans', sans-serif;transform:scaleX(0.9741);transform-origin:0 0;">3</div>
<div id="t68" style="position:absolute;left:1696.5px;top:720.1px;font-size:27.5px;-webkit-text-stroke-width:0.35px;line-height:1;white-space:pre;color:#dcdcde;font-weight:400;font-family:'Liberation Sans', sans-serif;transform:scaleX(1.0170);transform-origin:0 0;">0.222</div>
<div id="t69" style="position:absolute;left:1903.3px;top:720.1px;font-size:27.5px;-webkit-text-stroke-width:0.35px;line-height:1;white-space:pre;color:#dcdcde;font-weight:400;font-family:'Liberation Sans', sans-serif;transform:scaleX(0.9371);transform-origin:0 0;">0.214</div>
<div id="t70" style="position:absolute;left:2107.7px;top:720.1px;font-size:27.5px;-webkit-text-stroke-width:0.35px;line-height:1;white-space:pre;color:#dcdcde;font-weight:400;font-family:'Liberation Sans', sans-serif;transform:scaleX(1.0490);transform-origin:0 0;">0.230</div>
<div id="t71" style="position:absolute;left:2317.5px;top:720.1px;font-size:27.5px;-webkit-text-stroke-width:0.35px;line-height:1;white-space:pre;color:#dcdcde;font-weight:400;font-family:'Liberation Sans', sans-serif;transform:scaleX(0.9487);transform-origin:0 0;">0.016</div>
<div id="t72" style="position:absolute;left:2564.7px;top:704.3px;font-size:28px;-webkit-text-stroke-width:0.35px;line-height:1;white-space:pre;color:#dcdcde;font-weight:400;font-family:'Liberation Sans', sans-serif;transform:scaleX(1.0688);transform-origin:0 0;">Test Fiber</div>
<div id="t73" style="position:absolute;left:990.6px;top:1085.5px;font-size:28px;-webkit-text-stroke-width:0.35px;line-height:1;white-space:pre;color:#ffffff;font-weight:400;font-family:'Liberation Sans', sans-serif;">0.219</div>
<div id="t74" style="position:absolute;left:1203.8px;top:1085.5px;font-size:28px;-webkit-text-stroke-width:0.35px;line-height:1;white-space:pre;color:#ffffff;font-weight:400;font-family:'Liberation Sans', sans-serif;">0.222</div>
<div id="t75" style="position:absolute;left:1417.1px;top:1085.5px;font-size:28px;-webkit-text-stroke-width:0.35px;line-height:1;white-space:pre;color:#ffffff;font-weight:400;font-family:'Liberation Sans', sans-serif;">0.221</div>
<div id="t76" style="position:absolute;left:1630.3px;top:1085.5px;font-size:28px;-webkit-text-stroke-width:0.35px;line-height:1;white-space:pre;color:#ffffff;font-weight:400;font-family:'Liberation Sans', sans-serif;">0.220</div>
<div id="t77" style="position:absolute;left:1843.6px;top:1085.5px;font-size:28px;-webkit-text-stroke-width:0.35px;line-height:1;white-space:pre;color:#ffffff;font-weight:400;font-family:'Liberation Sans', sans-serif;">0.221</div>
<div id="t78" style="position:absolute;left:2056.8px;top:1085.5px;font-size:28px;-webkit-text-stroke-width:0.35px;line-height:1;white-space:pre;color:#ffffff;font-weight:400;font-family:'Liberation Sans', sans-serif;">0.222</div>
<div id="t79" style="position:absolute;left:2270.1px;top:1085.5px;font-size:28px;-webkit-text-stroke-width:0.35px;line-height:1;white-space:pre;color:#ffffff;font-weight:400;font-family:'Liberation Sans', sans-serif;">0.221</div>
<div id="t80" style="position:absolute;left:2483.3px;top:1085.5px;font-size:28px;-webkit-text-stroke-width:0.35px;line-height:1;white-space:pre;color:#ffffff;font-weight:400;font-family:'Liberation Sans', sans-serif;">0.221</div>
<div id="t81" style="position:absolute;left:990.6px;top:1160.6px;font-size:28px;-webkit-text-stroke-width:0.35px;line-height:1;white-space:pre;color:#ffffff;font-weight:400;font-family:'Liberation Sans', sans-serif;">0.222</div>
<div id="t82" style="position:absolute;left:1203.8px;top:1160.6px;font-size:28px;-webkit-text-stroke-width:0.35px;line-height:1;white-space:pre;color:#ffffff;font-weight:400;font-family:'Liberation Sans', sans-serif;">0.222</div>
<div id="t83" style="position:absolute;left:1417.1px;top:1160.6px;font-size:28px;-webkit-text-stroke-width:0.35px;line-height:1;white-space:pre;color:#ffffff;font-weight:400;font-family:'Liberation Sans', sans-serif;">0.222</div>
<div id="t84" style="position:absolute;left:1630.3px;top:1160.6px;font-size:28px;-webkit-text-stroke-width:0.35px;line-height:1;white-space:pre;color:#ffffff;font-weight:400;font-family:'Liberation Sans', sans-serif;">0.222</div>
<div id="t85" style="position:absolute;left:1843.6px;top:1160.6px;font-size:28px;-webkit-text-stroke-width:0.35px;line-height:1;white-space:pre;color:#ffffff;font-weight:400;font-family:'Liberation Sans', sans-serif;">0.222</div>
<div id="t86" style="position:absolute;left:2056.8px;top:1160.6px;font-size:28px;-webkit-text-stroke-width:0.35px;line-height:1;white-space:pre;color:#ffffff;font-weight:400;font-family:'Liberation Sans', sans-serif;">0.222</div>
<div id="t87" style="position:absolute;left:2270.1px;top:1160.6px;font-size:28px;-webkit-text-stroke-width:0.35px;line-height:1;white-space:pre;color:#ffffff;font-weight:400;font-family:'Liberation Sans', sans-serif;">0.222</div>
<div id="t88" style="position:absolute;left:2483.3px;top:1160.6px;font-size:28px;-webkit-text-stroke-width:0.35px;line-height:1;white-space:pre;color:#ffffff;font-weight:400;font-family:'Liberation Sans', sans-serif;">0.222</div>
<div id="t89" style="position:absolute;left:990.6px;top:1235.7px;font-size:28px;-webkit-text-stroke-width:0.35px;line-height:1;white-space:pre;color:#ffffff;font-weight:400;font-family:'Liberation Sans', sans-serif;">0.228</div>
<div id="t90" style="position:absolute;left:1203.8px;top:1235.7px;font-size:28px;-webkit-text-stroke-width:0.35px;line-height:1;white-space:pre;color:#ffffff;font-weight:400;font-family:'Liberation Sans', sans-serif;">0.228</div>
<div id="t91" style="position:absolute;left:1417.1px;top:1235.7px;font-size:28px;-webkit-text-stroke-width:0.35px;line-height:1;white-space:pre;color:#ffffff;font-weight:400;font-family:'Liberation Sans', sans-serif;">0.228</div>
<div id="t92" style="position:absolute;left:1630.3px;top:1235.7px;font-size:28px;-webkit-text-stroke-width:0.35px;line-height:1;white-space:pre;color:#ffffff;font-weight:400;font-family:'Liberation Sans', sans-serif;">0.228</div>
<div id="t93" style="position:absolute;left:1843.6px;top:1235.7px;font-size:28px;-webkit-text-stroke-width:0.35px;line-height:1;white-space:pre;color:#ffffff;font-weight:400;font-family:'Liberation Sans', sans-serif;">0.228</div>
<div id="t94" style="position:absolute;left:2056.8px;top:1235.7px;font-size:28px;-webkit-text-stroke-width:0.35px;line-height:1;white-space:pre;color:#ffffff;font-weight:400;font-family:'Liberation Sans', sans-serif;">0.228</div>
<div id="t95" style="position:absolute;left:2270.1px;top:1235.7px;font-size:28px;-webkit-text-stroke-width:0.35px;line-height:1;white-space:pre;color:#ffffff;font-weight:400;font-family:'Liberation Sans', sans-serif;">0.228</div>
<div id="t96" style="position:absolute;left:2483.3px;top:1235.7px;font-size:28px;-webkit-text-stroke-width:0.35px;line-height:1;white-space:pre;color:#ffffff;font-weight:400;font-family:'Liberation Sans', sans-serif;">0.227</div>
<div id="t97" style="position:absolute;left:990.6px;top:1310.8px;font-size:28px;-webkit-text-stroke-width:0.35px;line-height:1;white-space:pre;color:#ffffff;font-weight:400;font-family:'Liberation Sans', sans-serif;">0.248</div>
<div id="t98" style="position:absolute;left:1203.8px;top:1310.8px;font-size:28px;-webkit-text-stroke-width:0.35px;line-height:1;white-space:pre;color:#ffffff;font-weight:400;font-family:'Liberation Sans', sans-serif;">0.249</div>
<div id="t99" style="position:absolute;left:1417.1px;top:1310.8px;font-size:28px;-webkit-text-stroke-width:0.35px;line-height:1;white-space:pre;color:#ffffff;font-weight:400;font-family:'Liberation Sans', sans-serif;">0.249</div>
<div id="t100" style="position:absolute;left:1630.3px;top:1310.8px;font-size:28px;-webkit-text-stroke-width:0.35px;line-height:1;white-space:pre;color:#ffffff;font-weight:400;font-family:'Liberation Sans', sans-serif;">0.249</div>
<div id="t101" style="position:absolute;left:1843.6px;top:1310.8px;font-size:28px;-webkit-text-stroke-width:0.35px;line-height:1;white-space:pre;color:#ffffff;font-weight:400;font-family:'Liberation Sans', sans-serif;">0.249</div>
<div id="t102" style="position:absolute;left:2056.8px;top:1310.8px;font-size:28px;-webkit-text-stroke-width:0.35px;line-height:1;white-space:pre;color:#ffffff;font-weight:400;font-family:'Liberation Sans', sans-serif;">0.249</div>
<div id="t103" style="position:absolute;left:2270.1px;top:1310.8px;font-size:28px;-webkit-text-stroke-width:0.35px;line-height:1;white-space:pre;color:#ffffff;font-weight:400;font-family:'Liberation Sans', sans-serif;">0.247</div>
<div id="t104" style="position:absolute;left:2483.3px;top:1310.8px;font-size:28px;-webkit-text-stroke-width:0.35px;line-height:1;white-space:pre;color:#ffffff;font-weight:400;font-family:'Liberation Sans', sans-serif;">0.246</div>
<div id="t105" style="position:absolute;left:990.6px;top:1385.8px;font-size:28px;-webkit-text-stroke-width:0.35px;line-height:1;white-space:pre;color:#ffffff;font-weight:400;font-family:'Liberation Sans', sans-serif;">0.219</div>
<div id="t106" style="position:absolute;left:1203.8px;top:1385.8px;font-size:28px;-webkit-text-stroke-width:0.35px;line-height:1;white-space:pre;color:#ffffff;font-weight:400;font-family:'Liberation Sans', sans-serif;">0.220</div>
<div id="t107" style="position:absolute;left:1417.1px;top:1385.8px;font-size:28px;-webkit-text-stroke-width:0.35px;line-height:1;white-space:pre;color:#ffffff;font-weight:400;font-family:'Liberation Sans', sans-serif;">0.220</div>
<div id="t108" style="position:absolute;left:1630.3px;top:1385.8px;font-size:28px;-webkit-text-stroke-width:0.35px;line-height:1;white-space:pre;color:#ffffff;font-weight:400;font-family:'Liberation Sans', sans-serif;">0.220</div>
<div id="t109" style="position:absolute;left:1843.6px;top:1385.8px;font-size:28px;-webkit-text-stroke-width:0.35px;line-height:1;white-space:pre;color:#ffffff;font-weight:400;font-family:'Liberation Sans', sans-serif;">0.220</div>
<div id="t110" style="position:absolute;left:2056.8px;top:1385.8px;font-size:28px;-webkit-text-stroke-width:0.35px;line-height:1;white-space:pre;color:#ffffff;font-weight:400;font-family:'Liberation Sans', sans-serif;">0.220</div>
<div id="t111" style="position:absolute;left:2270.1px;top:1385.8px;font-size:28px;-webkit-text-stroke-width:0.35px;line-height:1;white-space:pre;color:#ffffff;font-weight:400;font-family:'Liberation Sans', sans-serif;">0.219</div>
<div id="t112" style="position:absolute;left:2483.3px;top:1385.8px;font-size:28px;-webkit-text-stroke-width:0.35px;line-height:1;white-space:pre;color:#ffffff;font-weight:400;font-family:'Liberation Sans', sans-serif;">0.219</div>
<div id="t113" style="position:absolute;left:990.6px;top:1460.9px;font-size:28px;-webkit-text-stroke-width:0.35px;line-height:1;white-space:pre;color:#ffffff;font-weight:400;font-family:'Liberation Sans', sans-serif;">0.217</div>
<div id="t114" style="position:absolute;left:1203.8px;top:1460.9px;font-size:28px;-webkit-text-stroke-width:0.35px;line-height:1;white-space:pre;color:#ffffff;font-weight:400;font-family:'Liberation Sans', sans-serif;">0.220</div>
<div id="t115" style="position:absolute;left:1417.1px;top:1460.9px;font-size:28px;-webkit-text-stroke-width:0.35px;line-height:1;white-space:pre;color:#ffffff;font-weight:400;font-family:'Liberation Sans', sans-serif;">0.218</div>
<div id="t116" style="position:absolute;left:1630.3px;top:1460.9px;font-size:28px;-webkit-text-stroke-width:0.35px;line-height:1;white-space:pre;color:#ffffff;font-weight:400;font-family:'Liberation Sans', sans-serif;">0.217</div>
<div id="t117" style="position:absolute;left:1843.6px;top:1460.9px;font-size:28px;-webkit-text-stroke-width:0.35px;line-height:1;white-space:pre;color:#ffffff;font-weight:400;font-family:'Liberation Sans', sans-serif;">0.218</div>
<div id="t118" style="position:absolute;left:2056.8px;top:1460.9px;font-size:28px;-webkit-text-stroke-width:0.35px;line-height:1;white-space:pre;color:#ffffff;font-weight:400;font-family:'Liberation Sans', sans-serif;">0.222</div>
<div id="t119" style="position:absolute;left:2270.1px;top:1460.9px;font-size:28px;-webkit-text-stroke-width:0.35px;line-height:1;white-space:pre;color:#ffffff;font-weight:400;font-family:'Liberation Sans', sans-serif;">0.220</div>
<div id="t120" style="position:absolute;left:2483.3px;top:1460.9px;font-size:28px;-webkit-text-stroke-width:0.35px;line-height:1;white-space:pre;color:#ffffff;font-weight:400;font-family:'Liberation Sans', sans-serif;">0.220</div>
<div id="t121" style="position:absolute;left:705.5px;top:1085.9px;font-size:28px;-webkit-text-stroke-width:0.35px;line-height:1;white-space:pre;color:#ffffff;font-weight:400;font-family:'Liberation Sans', sans-serif;">Fiber segment</div>
<div id="t122" style="position:absolute;left:713.5px;top:1161.1px;font-size:28px;-webkit-text-stroke-width:0.35px;line-height:1;white-space:pre;color:#ffffff;font-weight:400;font-family:'Liberation Sans', sans-serif;">Fiber segment</div>
<div id="t123" style="position:absolute;left:710.0px;top:1241.6px;font-size:28px;-webkit-text-stroke-width:0.35px;line-height:1;white-space:pre;color:#ffffff;font-weight:400;font-family:'Liberation Sans', sans-serif;">Fiber segment</div>
<div id="t124" style="position:absolute;left:714.5px;top:1312.5px;font-size:28px;-webkit-text-stroke-width:0.35px;line-height:1;white-space:pre;color:#ffffff;font-weight:400;font-family:'Liberation Sans', sans-serif;">Fiber segment</div>
<div id="t125" style="position:absolute;left:713.5px;top:1387.0px;font-size:28px;-webkit-text-stroke-width:0.35px;line-height:1;white-space:pre;color:#ffffff;font-weight:400;font-family:'Liberation Sans', sans-serif;">Fiber segment</div>
<div id="t126" style="position:absolute;left:713.5px;top:1461.5px;font-size:28px;-webkit-text-stroke-width:0.35px;line-height:1;white-space:pre;color:#ffffff;font-weight:400;font-family:'Liberation Sans', sans-serif;">Fiber segment</div>
<div id="t127" style="position:absolute;left:713.5px;top:1536.6px;font-size:28px;-webkit-text-stroke-width:0.35px;line-height:1;white-space:pre;color:#ffffff;font-weight:400;font-family:'Liberation Sans', sans-serif;">Fiber segment</div>
<div id="t128" style="position:absolute;left:900.3px;top:1608.9px;font-size:28px;-webkit-text-stroke-width:0.35px;line-height:1;white-space:pre;color:#ffffff;font-weight:400;font-family:'Liberation Sans', sans-serif;">1/19/25, 1:00:00 AM</div>
<div id="t129" style="position:absolute;left:1326.8px;top:1608.9px;font-size:28px;-webkit-text-stroke-width:0.35px;line-height:1;white-space:pre;color:#ffffff;font-weight:400;font-family:'Liberation Sans', sans-serif;">1/21/25, 1:00:00 AM</div>
<div id="t130" style="position:absolute;left:1753.3px;top:1608.9px;font-size:28px;-webkit-text-stroke-width:0.35px;line-height:1;white-space:pre;color:#ffffff;font-weight:400;font-family:'Liberation Sans', sans-serif;">1/23/25, 1:00:00 AM</div>
<div id="t131" style="position:absolute;left:2179.8px;top:1608.9px;font-size:28px;-webkit-text-stroke-width:0.35px;line-height:1;white-space:pre;color:#ffffff;font-weight:400;font-family:'Liberation Sans', sans-serif;">1/25/25, 1:00:00 AM</div>
<div id="t132" style="position:absolute;left:1422.6px;top:1650.0px;font-size:36px;-webkit-text-stroke-width:0.35px;line-height:1;white-space:pre;color:#ffffff;font-weight:400;font-family:'Liberation Sans', sans-serif;">Measurement dates</div>
<div id="t133" style="position:absolute;left:866.7px;top:1004.1px;font-size:36px;-webkit-text-stroke-width:0.35px;line-height:1;white-space:pre;color:#ffffff;font-weight:400;font-family:'Liberation Sans', sans-serif;transform:scaleX(1.0031);transform-origin:0 0;">Port <span style="color:#4b6de0">4</span>/2  Fiber Attenuation, 1650nm, From:1/20/25, 12:00:00 AM To:1/26/25, 11:59:59 PM</div>
<div id="t134" style="position:absolute;left:2705.2px;top:1059.0px;font-size:28px;-webkit-text-stroke-width:0.35px;line-height:1;white-space:pre;color:#ffffff;font-weight:400;font-family:'Liberation Sans', sans-serif;">1.00</div>
<div id="t135" style="position:absolute;left:2705.2px;top:1189.3px;font-size:28px;-webkit-text-stroke-width:0.35px;line-height:1;white-space:pre;color:#ffffff;font-weight:400;font-family:'Liberation Sans', sans-serif;">0.75</div>
<div id="t136" style="position:absolute;left:2705.2px;top:1320.7px;font-size:28px;-webkit-text-stroke-width:0.35px;line-height:1;white-space:pre;color:#ffffff;font-weight:400;font-family:'Liberation Sans', sans-serif;">0.50</div>
<div id="t137" style="position:absolute;left:2705.2px;top:1451.9px;font-size:28px;-webkit-text-stroke-width:0.35px;line-height:1;white-space:pre;color:#ffffff;font-weight:400;font-family:'Liberation Sans', sans-serif;">0.25</div>
<div id="t138" style="position:absolute;left:2705.2px;top:1583.8px;font-size:28px;-webkit-text-stroke-width:0.35px;line-height:1;white-space:pre;color:#ffffff;font-weight:400;font-family:'Liberation Sans', sans-serif;">0.00</div>
<div id="t139" style="position:absolute;left:2816.5px;top:1497.0px;font-size:36px;line-height:1;white-space:pre;color:#ffffff;font-weight:400;font-family:'Liberation Sans', sans-serif;transform:rotate(-90deg);transform-origin:0 30.60px;">Fiber attenuation [dB/km]</div>
<div id="t140" style="position:absolute;left:669.0px;top:1924.0px;font-size:28px;-webkit-text-stroke-width:0.35px;line-height:1;white-space:pre;color:#ffffff;font-weight:400;font-family:'Liberation Sans', sans-serif;">0.219</div>
<div id="t141" style="position:absolute;left:925.1px;top:1924.0px;font-size:28px;-webkit-text-stroke-width:0.35px;line-height:1;white-space:pre;color:#ffffff;font-weight:400;font-family:'Liberation Sans', sans-serif;">0.218</div>
<div id="t142" style="position:absolute;left:1181.3px;top:1924.0px;font-size:28px;-webkit-text-stroke-width:0.35px;line-height:1;white-space:pre;color:#ffffff;font-weight:400;font-family:'Liberation Sans', sans-serif;">0.219</div>
<div id="t143" style="position:absolute;left:1437.4px;top:1924.0px;font-size:28px;-webkit-text-stroke-width:0.35px;line-height:1;white-space:pre;color:#ffffff;font-weight:400;font-family:'Liberation Sans', sans-serif;">0.219</div>
<div id="t144" style="position:absolute;left:1693.5px;top:1924.0px;font-size:28px;-webkit-text-stroke-width:0.35px;line-height:1;white-space:pre;color:#ffffff;font-weight:400;font-family:'Liberation Sans', sans-serif;">0.219</div>
<div id="t145" style="position:absolute;left:1949.6px;top:1924.0px;font-size:28px;-webkit-text-stroke-width:0.35px;line-height:1;white-space:pre;color:#ffffff;font-weight:400;font-family:'Liberation Sans', sans-serif;">0.219</div>
<div id="t146" style="position:absolute;left:2205.8px;top:1924.0px;font-size:28px;-webkit-text-stroke-width:0.35px;line-height:1;white-space:pre;color:#ffffff;font-weight:400;font-family:'Liberation Sans', sans-serif;">0.218</div>
<div id="t147" style="position:absolute;left:2461.9px;top:1924.0px;font-size:28px;-webkit-text-stroke-width:0.35px;line-height:1;white-space:pre;color:#ffffff;font-weight:400;font-family:'Liberation Sans', sans-serif;">0.218</div>
<div id="t148" style="position:absolute;left:669.0px;top:2099.1px;font-size:28px;-webkit-text-stroke-width:0.35px;line-height:1;white-space:pre;color:#ffffff;font-weight:400;font-family:'Liberation Sans', sans-serif;">0.230</div>
<div id="t149" style="position:absolute;left:925.1px;top:2099.1px;font-size:28px;-webkit-text-stroke-width:0.35px;line-height:1;white-space:pre;color:#ffffff;font-weight:400;font-family:'Liberation Sans', sans-serif;">0.229</div>
<div id="t150" style="position:absolute;left:1181.3px;top:2099.1px;font-size:28px;-webkit-text-stroke-width:0.35px;line-height:1;white-space:pre;color:#ffffff;font-weight:400;font-family:'Liberation Sans', sans-serif;">0.229</div>
<div id="t151" style="position:absolute;left:1437.4px;top:2099.1px;font-size:28px;-webkit-text-stroke-width:0.35px;line-height:1;white-space:pre;color:#ffffff;font-weight:400;font-family:'Liberation Sans', sans-serif;">0.229</div>
<div id="t152" style="position:absolute;left:1693.5px;top:2099.1px;font-size:28px;-webkit-text-stroke-width:0.35px;line-height:1;white-space:pre;color:#ffffff;font-weight:400;font-family:'Liberation Sans', sans-serif;">0.229</div>
<div id="t153" style="position:absolute;left:1949.6px;top:2099.1px;font-size:28px;-webkit-text-stroke-width:0.35px;line-height:1;white-space:pre;color:#ffffff;font-weight:400;font-family:'Liberation Sans', sans-serif;">0.229</div>
<div id="t154" style="position:absolute;left:2205.8px;top:2099.1px;font-size:28px;-webkit-text-stroke-width:0.35px;line-height:1;white-space:pre;color:#ffffff;font-weight:400;font-family:'Liberation Sans', sans-serif;">0.228</div>
<div id="t155" style="position:absolute;left:2461.9px;top:2099.1px;font-size:28px;-webkit-text-stroke-width:0.35px;line-height:1;white-space:pre;color:#ffffff;font-weight:400;font-family:'Liberation Sans', sans-serif;">0.228</div>
<div id="t156" style="position:absolute;left:669.0px;top:2274.2px;font-size:28px;-webkit-text-stroke-width:0.35px;line-height:1;white-space:pre;color:#ffffff;font-weight:400;font-family:'Liberation Sans', sans-serif;">0.220</div>
<div id="t157" style="position:absolute;left:925.1px;top:2274.2px;font-size:28px;-webkit-text-stroke-width:0.35px;line-height:1;white-space:pre;color:#ffffff;font-weight:400;font-family:'Liberation Sans', sans-serif;">0.218</div>
<div id="t158" style="position:absolute;left:1181.3px;top:2274.2px;font-size:28px;-webkit-text-stroke-width:0.35px;line-height:1;white-space:pre;color:#ffffff;font-weight:400;font-family:'Liberation Sans', sans-serif;">0.217</div>
<div id="t159" style="position:absolute;left:1437.4px;top:2274.2px;font-size:28px;-webkit-text-stroke-width:0.35px;line-height:1;white-space:pre;color:#ffffff;font-weight:400;font-family:'Liberation Sans', sans-serif;">0.217</div>
<div id="t160" style="position:absolute;left:1693.5px;top:2274.2px;font-size:28px;-webkit-text-stroke-width:0.35px;line-height:1;white-space:pre;color:#ffffff;font-weight:400;font-family:'Liberation Sans', sans-serif;">0.218</div>
<div id="t161" style="position:absolute;left:1949.6px;top:2274.2px;font-size:28px;-webkit-text-stroke-width:0.35px;line-height:1;white-space:pre;color:#ffffff;font-weight:400;font-family:'Liberation Sans', sans-serif;">0.219</div>
<div id="t162" style="position:absolute;left:2205.8px;top:2274.2px;font-size:28px;-webkit-text-stroke-width:0.35px;line-height:1;white-space:pre;color:#ffffff;font-weight:400;font-family:'Liberation Sans', sans-serif;">0.215</div>
<div id="t163" style="position:absolute;left:2461.9px;top:2274.2px;font-size:28px;-webkit-text-stroke-width:0.35px;line-height:1;white-space:pre;color:#ffffff;font-weight:400;font-family:'Liberation Sans', sans-serif;">0.214</div>
<div id="t164" style="position:absolute;left:333.4px;top:1924.0px;font-size:28px;-webkit-text-stroke-width:0.35px;line-height:1;white-space:pre;color:#ffffff;font-weight:400;font-family:'Liberation Sans', sans-serif;">Fiber segment AB</div>
<div id="t165" style="position:absolute;left:330.4px;top:2099.3px;font-size:28px;-webkit-text-stroke-width:0.35px;line-height:1;white-space:pre;color:#ffffff;font-weight:400;font-family:'Liberation Sans', sans-serif;">Fiber segment BC</div>
<div id="t166" style="position:absolute;left:328.8px;top:2274.9px;font-size:28px;-webkit-text-stroke-width:0.35px;line-height:1;white-space:pre;color:#ffffff;font-weight:400;font-family:'Liberation Sans', sans-serif;">Fiber segment CD</div>
<div id="t167" style="position:absolute;left:578.7px;top:2396.9px;font-size:28px;-webkit-text-stroke-width:0.35px;line-height:1;white-space:pre;color:#ffffff;font-weight:400;font-family:'Liberation Sans', sans-serif;">1/19/25, 1:00:00 AM</div>
<div id="t168" style="position:absolute;left:1091.0px;top:2396.9px;font-size:28px;-webkit-text-stroke-width:0.35px;line-height:1;white-space:pre;color:#ffffff;font-weight:400;font-family:'Liberation Sans', sans-serif;">1/21/25, 1:00:00 AM</div>
<div id="t169" style="position:absolute;left:1603.2px;top:2396.9px;font-size:28px;-webkit-text-stroke-width:0.35px;line-height:1;white-space:pre;color:#ffffff;font-weight:400;font-family:'Liberation Sans', sans-serif;">1/23/25, 1:00:00 AM</div>
<div id="t170" style="position:absolute;left:2115.5px;top:2396.9px;font-size:28px;-webkit-text-stroke-width:0.35px;line-height:1;white-space:pre;color:#ffffff;font-weight:400;font-family:'Liberation Sans', sans-serif;">1/25/25, 1:00:00 AM</div>
<div id="t171" style="position:absolute;left:1422.6px;top:2437.8px;font-size:36px;-webkit-text-stroke-width:0.35px;line-height:1;white-space:pre;color:#ffffff;font-weight:400;font-family:'Liberation Sans', sans-serif;">Measurement dates</div>
<div id="t172" style="position:absolute;left:865.6px;top:1792.4px;font-size:36px;-webkit-text-stroke-width:0.35px;line-height:1;white-space:pre;color:#ffffff;font-weight:400;font-family:'Liberation Sans', sans-serif;transform:scaleX(1.0031);transform-origin:0 0;">Port <span style="color:#4b6de0">4</span>/3  Fiber Attenuation, 1650nm, From:1/20/25, 12:00:00 AM To:1/26/25, 11:59:59 PM</div>
<div id="t173" style="position:absolute;left:2705.2px;top:1846.9px;font-size:28px;-webkit-text-stroke-width:0.35px;line-height:1;white-space:pre;color:#ffffff;font-weight:400;font-family:'Liberation Sans', sans-serif;">1.00</div>
<div id="t174" style="position:absolute;left:2705.2px;top:1978.3px;font-size:28px;-webkit-text-stroke-width:0.35px;line-height:1;white-space:pre;color:#ffffff;font-weight:400;font-family:'Liberation Sans', sans-serif;">0.75</div>
<div id="t175" style="position:absolute;left:2705.2px;top:2109.7px;font-size:28px;-webkit-text-stroke-width:0.35px;line-height:1;white-space:pre;color:#ffffff;font-weight:400;font-family:'Liberation Sans', sans-serif;">0.50</div>
<div id="t176" style="position:absolute;left:2705.2px;top:2241.1px;font-size:28px;-webkit-text-stroke-width:0.35px;line-height:1;white-space:pre;color:#ffffff;font-weight:400;font-family:'Liberation Sans', sans-serif;">0.25</div>
<div id="t177" style="position:absolute;left:2705.2px;top:2372.5px;font-size:28px;-webkit-text-stroke-width:0.35px;line-height:1;white-space:pre;color:#ffffff;font-weight:400;font-family:'Liberation Sans', sans-serif;">0.00</div>
<div id="t178" style="position:absolute;left:2816.5px;top:2285.0px;font-size:36px;line-height:1;white-space:pre;color:#ffffff;font-weight:400;font-family:'Liberation Sans', sans-serif;transform:rotate(-90deg);transform-origin:0 30.60px;">Fiber attenuation [dB/km]</div>
<div id="t179" style="position:absolute;left:2998.4px;top:442.1px;font-size:58.5px;line-height:1;white-space:pre;color:#000;font-weight:700;font-family:'Liberation Sans', sans-serif;-webkit-text-stroke:1.2px #000;">The table lists the average</div>
<div id="t180" style="position:absolute;left:2998.4px;top:510.9px;font-size:58.5px;line-height:1;white-space:pre;color:#000;font-weight:700;font-family:'Liberation Sans', sans-serif;-webkit-text-stroke:1.2px #000;">attenuation for each port.</div>
<div id="t181" style="position:absolute;left:2998.4px;top:579.7px;font-size:58.5px;line-height:1;white-space:pre;color:#000;font-weight:700;font-family:'Liberation Sans', sans-serif;-webkit-text-stroke:1.2px #000;">The table will also show Min/Max</div>
<div id="t182" style="position:absolute;left:2998.4px;top:648.5px;font-size:58.5px;line-height:1;white-space:pre;color:#000;font-weight:700;font-family:'Liberation Sans', sans-serif;-webkit-text-stroke:1.2px #000;">Attenuation and Difference, if</div>
<div id="t183" style="position:absolute;left:2998.4px;top:717.3px;font-size:58.5px;line-height:1;white-space:pre;color:#000;font-weight:700;font-family:'Liberation Sans', sans-serif;-webkit-text-stroke:1.2px #000;">Advanced Control and the metric</div>
<div id="t184" style="position:absolute;left:2998.4px;top:786.1px;font-size:58.5px;line-height:1;white-space:pre;color:#000;font-weight:700;font-family:'Liberation Sans', sans-serif;-webkit-text-stroke:1.2px #000;">is turned on.</div>
<div id="t185" style="position:absolute;left:3026.6px;top:1468.6px;font-size:58.7px;line-height:1;white-space:pre;color:#000;font-weight:700;font-family:'Liberation Sans', sans-serif;-webkit-text-stroke:1.2px #000;">For the specified time period,</div>
<div id="t186" style="position:absolute;left:3026.6px;top:1537.4px;font-size:58.7px;line-height:1;white-space:pre;color:#000;font-weight:700;font-family:'Liberation Sans', sans-serif;-webkit-text-stroke:1.2px #000;">attenuation for each fiber</div>
<div id="t187" style="position:absolute;left:3026.6px;top:1606.2px;font-size:58.7px;line-height:1;white-space:pre;color:#000;font-weight:700;font-family:'Liberation Sans', sans-serif;-webkit-text-stroke:1.2px #000;">segment is presented in graphs</div>
<div id="t188" style="position:absolute;left:3026.6px;top:1675.0px;font-size:58.7px;line-height:1;white-space:pre;color:#000;font-weight:700;font-family:'Liberation Sans', sans-serif;-webkit-text-stroke:1.2px #000;">for every port selected.</div>
<div style="position:absolute;left:1429.1px;top:16.1px;width:173.7px;height:294.4px;box-sizing:border-box;border:7.2px solid #f36c12;border-radius:31px;"></div>
<div style="position:absolute;left:1509.9px;top:426.6px;width:1439.7px;height:458.1px;box-sizing:border-box;border:10.4px solid #f36c12;border-radius:62px;"></div>
<svg style="position:absolute;left:0;top:0" width="3994" height="2768"><path d="M2765,979 L2970,977 L2981,2456 L2775,2458" fill="none" stroke="#ed7d31" stroke-width="10.5" stroke-linecap="round" stroke-linejoin="miter"/></svg>
</body></html>
